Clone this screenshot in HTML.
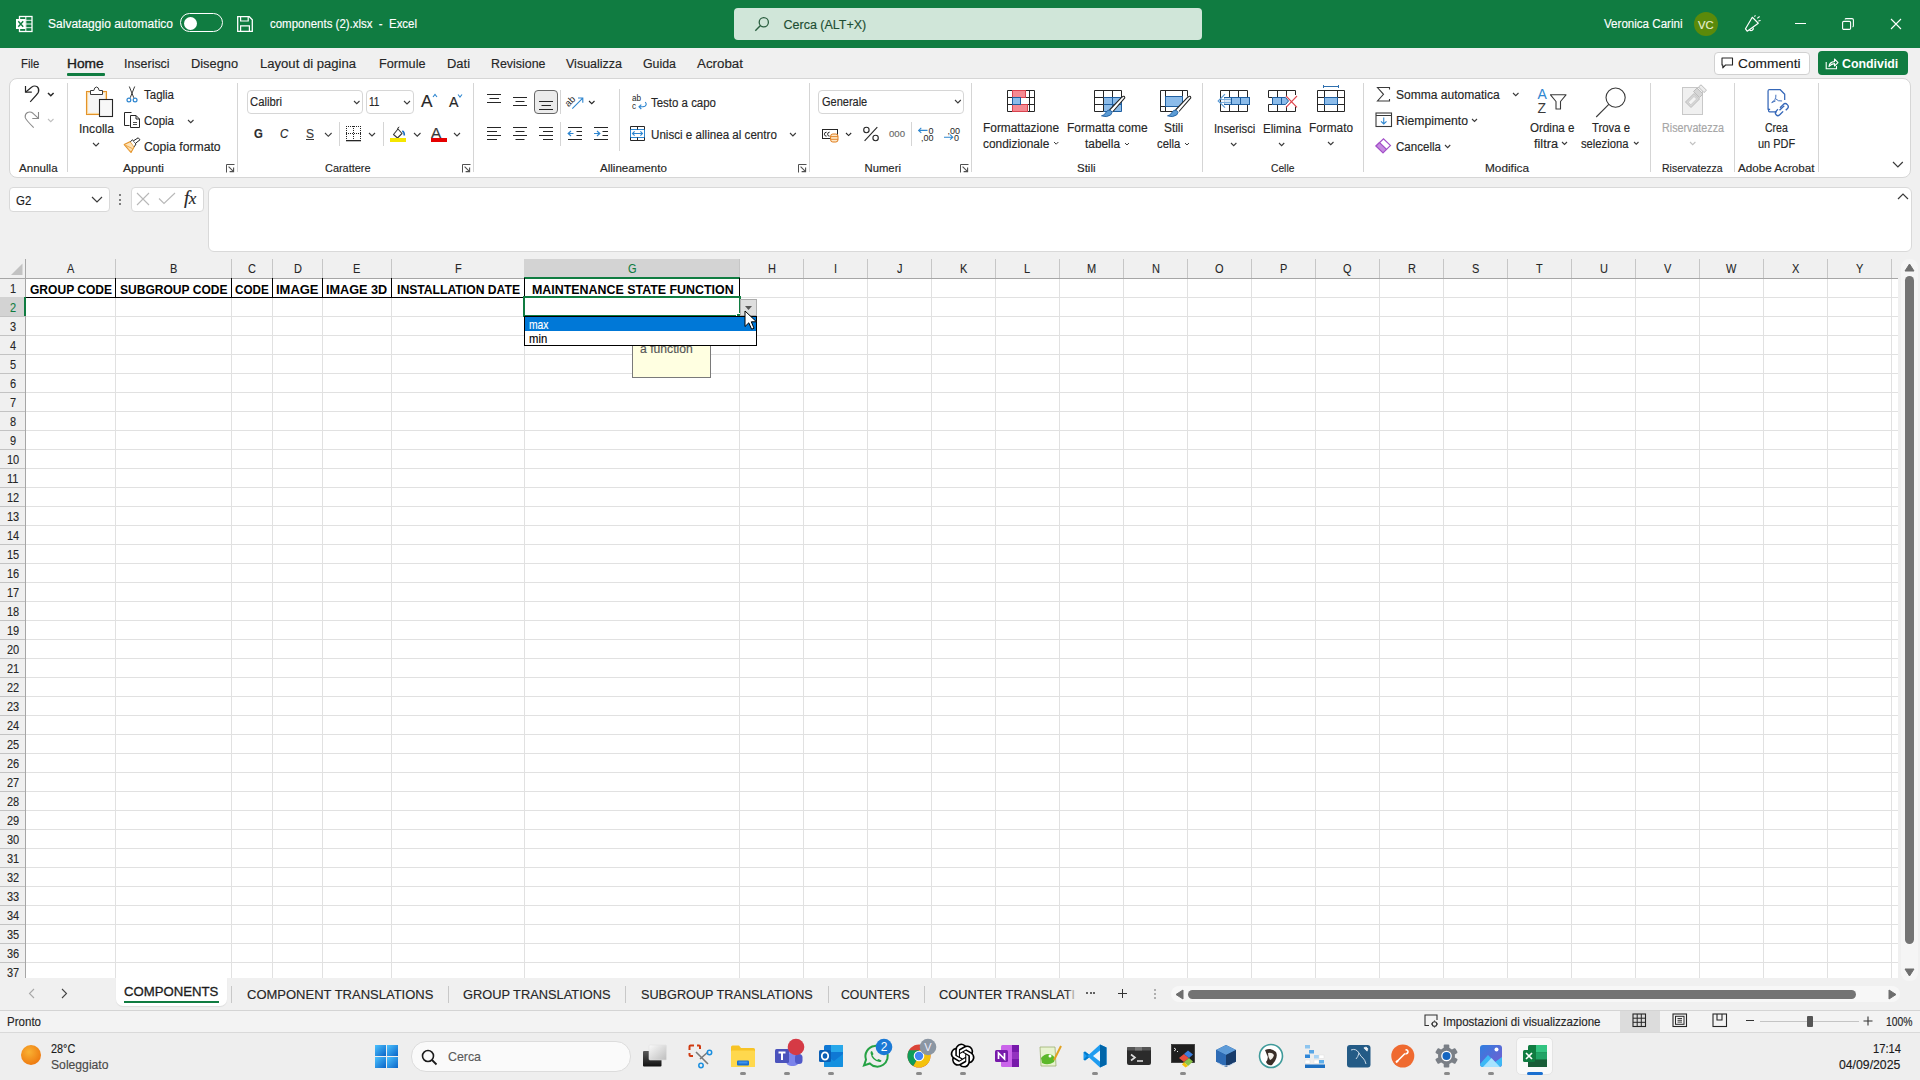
<!DOCTYPE html><html><head><meta charset="utf-8"><style>
html,body{margin:0;padding:0}
body{width:1920px;height:1080px;position:relative;overflow:hidden;background:#f0f0f0;font-family:"Liberation Sans",sans-serif}
.a{position:absolute;box-sizing:content-box}
.t{position:absolute;white-space:pre;line-height:1;transform-origin:0 0;-webkit-text-stroke:0.15px currentColor}
svg.a{overflow:visible}
</style></head><body>
<div class="a" style="left:0px;top:0px;width:1920px;height:48px;background:#107c41;"></div>
<svg class="a" style="left:15px;top:15px;" width="18" height="18" viewBox="0 0 18 18"><rect x="4.5" y="1.5" width="12.5" height="15" fill="none" stroke="#fff" stroke-width="1.3"/><line x1="10.8" y1="1.5" x2="10.8" y2="16.5" stroke="#fff" stroke-width="1"/><line x1="4.5" y1="5.3" x2="17" y2="5.3" stroke="#fff" stroke-width="0.9"/><line x1="4.5" y1="9" x2="17" y2="9" stroke="#fff" stroke-width="0.9"/><line x1="4.5" y1="12.7" x2="17" y2="12.7" stroke="#fff" stroke-width="0.9"/><rect x="1" y="4" width="9.5" height="10" fill="#fff"/><path d="M3.3 6.2 L8.2 11.8 M8.2 6.2 L3.3 11.8" stroke="#107c41" stroke-width="1.4"/></svg>
<div class="t" style="left:48.00px;top:18.12px;font-size:12.5px;color:#ffffff;transform:scaleX(0.9620);">Salvataggio automatico</div>
<div class="a" style="left:180px;top:13px;width:41px;height:17px;border:1.5px solid #fff;border-radius:11px;"></div>
<div class="a" style="left:184px;top:16.5px;width:13px;height:13px;background:#fff;border-radius:50%;"></div>
<svg class="a" style="left:236px;top:15px;" width="18" height="18" viewBox="0 0 18 18"><path d="M1.7 1.7 H13.3 L16.3 4.7 V16.3 H1.7 Z" fill="none" stroke="#fff" stroke-width="1.3"/><path d="M4.6 1.7 V6 H12.2 V1.7" fill="none" stroke="#fff" stroke-width="1.2"/><path d="M4.6 16.3 V10.8 H13.4 V16.3" fill="none" stroke="#fff" stroke-width="1.2"/></svg>
<div class="t" style="left:269.50px;top:18.32px;font-size:12.5px;color:#ffffff;transform:scaleX(0.9161);">components (2).xlsx  -  Excel</div>
<div class="a" style="left:734px;top:8px;width:468px;height:32px;background:#d0e6d9;border-radius:4px;"></div>
<svg class="a" style="left:754px;top:16px;" width="16" height="16" viewBox="0 0 16 16"><circle cx="9.8" cy="6.2" r="4.6" fill="none" stroke="#2b5f40" stroke-width="1.3"/><line x1="6.5" y1="9.5" x2="1.3" y2="14.7" stroke="#2b5f40" stroke-width="1.4"/></svg>
<div class="t" style="left:783.50px;top:18.62px;font-size:12.5px;color:#1e4e33;">Cerca (ALT+X)</div>
<div class="t" style="left:1604.00px;top:18.32px;font-size:12.5px;color:#ffffff;transform:scaleX(0.9261);">Veronica Carini</div>
<div class="a" style="left:1694px;top:12px;width:24px;height:24px;background:#5b8a0a;border-radius:50%;"></div>
<div class="t" style="left:1698.30px;top:20.09px;font-size:11px;color:#e8f0d0;transform:scaleX(1.0143);">VC</div>
<svg class="a" style="left:1744px;top:15px;" width="19" height="18" viewBox="0 0 19 18"><path d="M1.5 13.8 L8.3 2.3 L14.3 8.2 L3.2 16.2 Z" fill="none" stroke="#fff" stroke-width="1.2" stroke-linejoin="round"/><path d="M5.5 14.8 A2.2 2.2 0 0 0 9.2 12.6" fill="none" stroke="#fff" stroke-width="1.2"/><path d="M10.5 1.7 L11.4 0.3 M13.2 3.4 L15.6 1.5 M14.3 6 L16.6 5.5" stroke="#fff" stroke-width="1.1"/></svg>
<div class="a" style="left:1795px;top:23px;width:10.5px;height:1.2px;background:#fff;"></div>
<svg class="a" style="left:1842px;top:18px;" width="12" height="12" viewBox="0 0 12 12"><rect x="0.6" y="3.4" width="8" height="8" rx="1.2" fill="none" stroke="#fff" stroke-width="1.1"/><path d="M3 1.4 Q3.3 0.6 4.2 0.6 H10 Q11.4 0.6 11.4 2 V7.8 Q11.4 8.6 10.6 8.9" fill="none" stroke="#fff" stroke-width="1.1"/></svg>
<svg class="a" style="left:1890px;top:18px;" width="12" height="12" viewBox="0 0 12 12"><path d="M1 1 L11 11 M11 1 L1 11" stroke="#fff" stroke-width="1.1"/></svg>
<div class="t" style="left:21.40px;top:58.12px;font-size:12.5px;color:#262626;transform:scaleX(0.9036);">File</div>
<div class="t" style="left:67.30px;top:58.12px;font-size:12.5px;color:#1b1b1b;transform:scaleX(1.1007);-webkit-text-stroke:0.35px #1b1b1b;">Home</div>
<div class="t" style="left:124.40px;top:58.12px;font-size:12.5px;color:#262626;transform:scaleX(0.9947);">Inserisci</div>
<div class="t" style="left:190.50px;top:58.12px;font-size:12.5px;color:#262626;transform:scaleX(1.0271);">Disegno</div>
<div class="t" style="left:260.40px;top:58.12px;font-size:12.5px;color:#262626;transform:scaleX(1.0464);">Layout di pagina</div>
<div class="t" style="left:379.00px;top:58.12px;font-size:12.5px;color:#262626;transform:scaleX(1.0143);">Formule</div>
<div class="t" style="left:447.00px;top:58.12px;font-size:12.5px;color:#262626;transform:scaleX(1.0347);">Dati</div>
<div class="t" style="left:491.00px;top:58.12px;font-size:12.5px;color:#262626;transform:scaleX(0.9930);">Revisione</div>
<div class="t" style="left:566.00px;top:58.12px;font-size:12.5px;color:#262626;">Visualizza</div>
<div class="t" style="left:642.50px;top:58.12px;font-size:12.5px;color:#262626;transform:scaleX(0.9894);">Guida</div>
<div class="t" style="left:697.00px;top:58.12px;font-size:12.5px;color:#262626;transform:scaleX(1.0678);">Acrobat</div>
<div class="a" style="left:67px;top:73px;width:38px;height:2.5px;background:#107c41;border-radius:1px;"></div>
<div class="a" style="left:1713.5px;top:51.5px;width:94px;height:21px;background:#fff;border:1px solid #d1d1d1;border-radius:4px;"></div>
<svg class="a" style="left:1721px;top:57px;" width="13" height="12" viewBox="0 0 13 12"><path d="M1 1 H11.5 V8 H4.5 L1.8 10.8 V8 H1 Z" fill="none" stroke="#262626" stroke-width="1.1" stroke-linejoin="round"/></svg>
<div class="t" style="left:1737.50px;top:56.70px;font-size:13px;color:#1b1b1b;transform:scaleX(1.0551);">Commenti</div>
<div class="a" style="left:1818px;top:51px;width:90px;height:24px;background:#107c41;border-radius:4px;"></div>
<svg class="a" style="left:1825px;top:57px;" width="14" height="13" viewBox="0 0 14 13"><path d="M1.2 5 V11.8 H11.5 V9" fill="none" stroke="#fff" stroke-width="1.1"/><path d="M4 9.5 Q4.5 4.8 9.5 4.6 V2 L13 5.6 L9.5 9 V6.6 Q6.5 6.6 4 9.5 Z" fill="none" stroke="#fff" stroke-width="1.1" stroke-linejoin="round"/></svg>
<div class="t" style="left:1842.00px;top:56.70px;font-size:13px;color:#ffffff;font-weight:700;transform:scaleX(0.9507);-webkit-text-stroke:0;">Condividi</div>
<div class="a" style="left:9px;top:78px;width:1900px;height:97.5px;background:#fff;border:1px solid #d6d6d6;border-radius:8px;"></div>
<div class="a" style="left:67px;top:83px;width:1px;height:89px;background:#d5d5d5;"></div>
<div class="a" style="left:237px;top:83px;width:1px;height:89px;background:#d5d5d5;"></div>
<div class="a" style="left:473px;top:83px;width:1px;height:89px;background:#d5d5d5;"></div>
<div class="a" style="left:809px;top:83px;width:1px;height:89px;background:#d5d5d5;"></div>
<div class="a" style="left:971px;top:83px;width:1px;height:89px;background:#d5d5d5;"></div>
<div class="a" style="left:1202px;top:83px;width:1px;height:89px;background:#d5d5d5;"></div>
<div class="a" style="left:1363px;top:83px;width:1px;height:89px;background:#d5d5d5;"></div>
<div class="a" style="left:1650px;top:83px;width:1px;height:89px;background:#d5d5d5;"></div>
<div class="a" style="left:1734px;top:83px;width:1px;height:89px;background:#d5d5d5;"></div>
<div class="a" style="left:1818px;top:83px;width:1px;height:89px;background:#d5d5d5;"></div>
<div class="a" style="left:339px;top:122px;width:1px;height:24px;background:#d5d5d5;"></div>
<div class="a" style="left:383px;top:122px;width:1px;height:24px;background:#d5d5d5;"></div>
<div class="a" style="left:560px;top:90px;width:1px;height:24px;background:#d5d5d5;"></div>
<div class="a" style="left:560px;top:122px;width:1px;height:24px;background:#d5d5d5;"></div>
<div class="a" style="left:619px;top:89px;width:1px;height:62px;background:#d5d5d5;"></div>
<div class="a" style="left:911px;top:122px;width:1px;height:24px;background:#d5d5d5;"></div>
<div class="t" style="left:19.40px;top:162.93px;font-size:11.3px;color:#262626;transform:scaleX(1.0240);">Annulla</div>
<div class="t" style="left:123.00px;top:162.93px;font-size:11.3px;color:#262626;transform:scaleX(1.0698);">Appunti</div>
<div class="t" style="left:324.75px;top:162.93px;font-size:11.3px;color:#262626;transform:scaleX(0.9681);">Carattere</div>
<div class="t" style="left:599.50px;top:162.93px;font-size:11.3px;color:#262626;transform:scaleX(1.0241);">Allineamento</div>
<div class="t" style="left:864.50px;top:162.93px;font-size:11.3px;color:#262626;">Numeri</div>
<div class="t" style="left:1077.00px;top:162.93px;font-size:11.3px;color:#262626;transform:scaleX(1.0160);">Stili</div>
<div class="t" style="left:1271.00px;top:162.93px;font-size:11.3px;color:#262626;transform:scaleX(0.9087);">Celle</div>
<div class="t" style="left:1484.50px;top:162.93px;font-size:11.3px;color:#262626;transform:scaleX(1.0457);">Modifica</div>
<div class="t" style="left:1661.60px;top:162.93px;font-size:11.3px;color:#262626;transform:scaleX(0.9294);">Riservatezza</div>
<div class="t" style="left:1738.00px;top:162.93px;font-size:11.3px;color:#262626;transform:scaleX(1.0333);">Adobe Acrobat</div>
<svg class="a" style="left:226px;top:164px;" width="9" height="9" viewBox="0 0 9 9"><path d="M0.5 8.5 V0.5 H8.5" fill="none" stroke="#505050" stroke-width="1"/><path d="M2.6 2.6 L7.6 7.6 M7.6 3.6 V7.6 H3.6" fill="none" stroke="#505050" stroke-width="1.1"/></svg>
<svg class="a" style="left:462px;top:164px;" width="9" height="9" viewBox="0 0 9 9"><path d="M0.5 8.5 V0.5 H8.5" fill="none" stroke="#505050" stroke-width="1"/><path d="M2.6 2.6 L7.6 7.6 M7.6 3.6 V7.6 H3.6" fill="none" stroke="#505050" stroke-width="1.1"/></svg>
<svg class="a" style="left:798px;top:164px;" width="9" height="9" viewBox="0 0 9 9"><path d="M0.5 8.5 V0.5 H8.5" fill="none" stroke="#505050" stroke-width="1"/><path d="M2.6 2.6 L7.6 7.6 M7.6 3.6 V7.6 H3.6" fill="none" stroke="#505050" stroke-width="1.1"/></svg>
<svg class="a" style="left:960px;top:164px;" width="9" height="9" viewBox="0 0 9 9"><path d="M0.5 8.5 V0.5 H8.5" fill="none" stroke="#505050" stroke-width="1"/><path d="M2.6 2.6 L7.6 7.6 M7.6 3.6 V7.6 H3.6" fill="none" stroke="#505050" stroke-width="1.1"/></svg>
<svg class="a" style="left:24px;top:84px;" width="16" height="19" viewBox="0 0 16 19"><path d="M1.5 2 V8.2 H7.8" fill="none" stroke="#262626" stroke-width="1.2"/><path d="M1.8 8 L7.5 3.2 Q10.5 1 13.2 2.8 Q15.6 5 14.4 8.3 Q13.8 9.8 6.2 17.8" fill="none" stroke="#262626" stroke-width="1.2"/></svg>
<svg class="a" style="left:46.6px;top:92.1px;" width="7.600000000000001" height="4.800000000000001" viewBox="0 0 7.600000000000001 4.800000000000001"><polyline points="1,1 3.8000000000000007,3.8000000000000007 6.600000000000001,1" fill="none" stroke="#262626" stroke-width="1.5"/></svg>
<svg class="a" style="left:24px;top:110px;" width="16" height="19" viewBox="0 0 16 19"><path d="M14.5 2 V8.5 H8.3" fill="none" stroke="#8a8a8a" stroke-width="1.1"/><path d="M14.2 8.2 L9 3.3 Q6.5 1.3 3.5 2.5 Q0.8 4.2 1.2 7.5 Q1.6 9.6 9.7 17.6" fill="none" stroke="#8a8a8a" stroke-width="1.1"/></svg>
<svg class="a" style="left:46.5px;top:118.125px;" width="7.5" height="4.75" viewBox="0 0 7.5 4.75"><polyline points="1,1 3.75,3.75 6.5,1" fill="none" stroke="#c0c0c0" stroke-width="1.1"/></svg>
<svg class="a" style="left:85px;top:86px;" width="30" height="32" viewBox="0 0 30 32"><rect x="1.5" y="5.5" width="20" height="23" fill="#f6f6f6" stroke="#e3932a" stroke-width="1.1"/><rect x="2.6" y="6.6" width="17.8" height="20.8" fill="none" stroke="#fbd79a" stroke-width="1"/><path d="M5.5 8.5 V4.5 H8.8 Q9.5 1 11.5 1 Q13.5 1 14.2 4.5 H17.5 V8.5 Z" fill="#fff" stroke="#3a3a3a" stroke-width="1" stroke-linejoin="round"/><rect x="14.5" y="13.5" width="13" height="17" fill="#f7f7f7" stroke="#262626" stroke-width="1.1"/></svg>
<div class="t" style="left:79.00px;top:123.32px;font-size:12.5px;color:#262626;transform:scaleX(0.9687);">Incolla</div>
<svg class="a" style="left:92px;top:142.0px;" width="8" height="5.0" viewBox="0 0 8 5.0"><polyline points="1,1 4.0,4.0 7,1" fill="none" stroke="#3a3a3a" stroke-width="1.1"/></svg>
<svg class="a" style="left:123px;top:85px;" width="16" height="18" viewBox="0 0 16 18"><path d="M6.3 1.5 L10.8 12.8 M11.7 1.5 L7.2 12.8" stroke="#3a3a3a" stroke-width="1" fill="none"/><circle cx="5.9" cy="15" r="1.9" fill="#fff" stroke="#2e86d0" stroke-width="1.2"/><circle cx="12.1" cy="15" r="1.9" fill="#fff" stroke="#2e86d0" stroke-width="1.2"/></svg>
<div class="t" style="left:144.00px;top:89.32px;font-size:12.5px;color:#262626;transform:scaleX(0.9186);">Taglia</div>
<svg class="a" style="left:123px;top:111px;" width="18" height="18" viewBox="0 0 18 18"><path d="M8.5 1.5 H1.5 V14.5 H6.5" fill="none" stroke="#262626" stroke-width="1"/><path d="M7.5 4.5 H13 L16.5 8 V16.5 H7.5 Z" fill="#fff" stroke="#262626" stroke-width="1" stroke-linejoin="round"/><path d="M13 4.5 V8 H16.5" fill="none" stroke="#262626" stroke-width="1"/><path d="M10 11.5 H14 M10 13.5 H14" stroke="#3a3a3a" stroke-width="0.9"/></svg>
<div class="t" style="left:144.00px;top:115.07px;font-size:12.5px;color:#262626;transform:scaleX(0.9186);">Copia</div>
<svg class="a" style="left:186.5px;top:118.625px;" width="7.5" height="4.75" viewBox="0 0 7.5 4.75"><polyline points="1,1 3.75,3.75 6.5,1" fill="none" stroke="#3a3a3a" stroke-width="1.1"/></svg>
<svg class="a" style="left:123px;top:137px;" width="18" height="17" viewBox="0 0 18 17"><path d="M1.2 7.6 L7.4 4.6 L11.2 9.8 L8 15.4 Z" fill="#fde3b8" stroke="#e3932a" stroke-width="1.1" stroke-linejoin="round"/><path d="M2 8 L9.4 11.6 M4.6 11.6 L8 15.4" stroke="#f0a848" stroke-width="1"/><path d="M7.4 4.6 L9.6 2.8 L13 7 L11.2 9.8" fill="#fff" stroke="#262626" stroke-width="1" stroke-linejoin="round"/><path d="M10.5 3.8 L15.2 0.8 L17 2.8 L12.6 6.2" fill="#fff" stroke="#262626" stroke-width="1" stroke-linejoin="round"/></svg>
<div class="t" style="left:144.00px;top:140.92px;font-size:12.5px;color:#262626;transform:scaleX(0.9757);">Copia formato</div>
<div class="a" style="left:246.5px;top:90px;width:114px;height:22px;background:#fff;border:1px solid #d6d6d6;border-radius:4px;"></div>
<div class="t" style="left:249.50px;top:95.92px;font-size:12.5px;color:#262626;transform:scaleX(0.9034);">Calibri</div>
<svg class="a" style="left:352.5px;top:99.625px;" width="7.5" height="4.75" viewBox="0 0 7.5 4.75"><polyline points="1,1 3.75,3.75 6.5,1" fill="none" stroke="#3a3a3a" stroke-width="1.1"/></svg>
<div class="a" style="left:365.5px;top:90px;width:46px;height:22px;background:#fff;border:1px solid #d6d6d6;border-radius:4px;"></div>
<div class="t" style="left:368.50px;top:95.92px;font-size:12.5px;color:#262626;transform:scaleX(0.8092);">11</div>
<svg class="a" style="left:403px;top:99.5px;" width="8" height="5.0" viewBox="0 0 8 5.0"><polyline points="1,1 4.0,4.0 7,1" fill="none" stroke="#3a3a3a" stroke-width="1.1"/></svg>
<div class="t" style="left:421.00px;top:92.51px;font-size:17px;color:#262626;transform:scaleX(1.0142);">A</div>
<svg class="a" style="left:432px;top:93px;" width="6" height="5" viewBox="0 0 6 5"><polyline points="1,4 3,1.5 5,4" fill="none" stroke="#2e86d0" stroke-width="1.1"/></svg>
<div class="t" style="left:448.50px;top:95.05px;font-size:14px;color:#262626;transform:scaleX(1.0174);">A</div>
<svg class="a" style="left:457px;top:93px;" width="6" height="5" viewBox="0 0 6 5"><polyline points="1,1.5 3,4 5,1.5" fill="none" stroke="#2e86d0" stroke-width="1.1"/></svg>
<div class="t" style="left:253.50px;top:127.40px;font-size:13px;color:#2b2b2b;font-weight:700;transform:scaleX(0.8702);">G</div>
<div class="t" style="left:280.00px;top:127.40px;font-size:13px;color:#262626;transform:scaleX(0.8842);font-style:italic;">C</div>
<div class="t" style="left:306.00px;top:127.40px;font-size:13px;color:#3a3a3a;transform:scaleX(0.9227);">S</div>
<div class="a" style="left:306px;top:139px;width:8px;height:1.2px;background:#3a3a3a;"></div>
<svg class="a" style="left:324px;top:131.85px;" width="8.600000000000023" height="5.300000000000011" viewBox="0 0 8.600000000000023 5.300000000000011"><polyline points="1,1 4.300000000000011,4.300000000000011 7.600000000000023,1" fill="none" stroke="#3a3a3a" stroke-width="1.1"/></svg>
<svg class="a" style="left:345px;top:125px;" width="17" height="17" viewBox="0 0 17 17"><g fill="#262626"><rect x="1" y="1" width="1" height="1"/><rect x="1" y="3" width="1" height="1"/><rect x="1" y="5" width="1" height="1"/><rect x="1" y="7" width="1" height="1"/><rect x="1" y="8" width="1" height="1"/><rect x="1" y="9" width="1" height="1"/><rect x="1" y="11" width="1" height="1"/><rect x="1" y="13" width="1" height="1"/><rect x="3" y="1" width="1" height="1"/><rect x="3" y="8" width="1" height="1"/><rect x="5" y="1" width="1" height="1"/><rect x="5" y="8" width="1" height="1"/><rect x="7" y="1" width="1" height="1"/><rect x="7" y="8" width="1" height="1"/><rect x="8" y="1" width="1" height="1"/><rect x="8" y="3" width="1" height="1"/><rect x="8" y="5" width="1" height="1"/><rect x="8" y="7" width="1" height="1"/><rect x="8" y="9" width="1" height="1"/><rect x="8" y="11" width="1" height="1"/><rect x="8" y="13" width="1" height="1"/><rect x="9" y="1" width="1" height="1"/><rect x="9" y="8" width="1" height="1"/><rect x="11" y="1" width="1" height="1"/><rect x="11" y="8" width="1" height="1"/><rect x="13" y="1" width="1" height="1"/><rect x="13" y="8" width="1" height="1"/><rect x="15" y="1" width="1" height="1"/><rect x="15" y="3" width="1" height="1"/><rect x="15" y="5" width="1" height="1"/><rect x="15" y="7" width="1" height="1"/><rect x="15" y="8" width="1" height="1"/><rect x="15" y="9" width="1" height="1"/><rect x="15" y="11" width="1" height="1"/><rect x="15" y="13" width="1" height="1"/><rect x="1" y="15" width="15" height="1.3"/></g></svg>
<svg class="a" style="left:368px;top:132.0px;" width="8" height="5.0" viewBox="0 0 8 5.0"><polyline points="1,1 4.0,4.0 7,1" fill="none" stroke="#3a3a3a" stroke-width="1.1"/></svg>
<svg class="a" style="left:389px;top:125px;" width="18" height="18" viewBox="0 0 18 18"><path d="M4.5 9.5 L9 4 L13 8.5 L8.5 13 Z" fill="#fff" stroke="#3a3a3a" stroke-width="1.1" stroke-linejoin="round"/><path d="M8.5 5 Q8.5 2 10.3 2" fill="none" stroke="#3a3a3a" stroke-width="1"/><path d="M13.3 6 Q15.5 7 15.3 10.5" fill="none" stroke="#1e6fc0" stroke-width="1.6"/><rect x="1" y="13" width="16" height="4" fill="#f5e600"/></svg>
<svg class="a" style="left:412.5px;top:131.875px;" width="8.5" height="5.25" viewBox="0 0 8.5 5.25"><polyline points="1,1 4.25,4.25 7.5,1" fill="none" stroke="#3a3a3a" stroke-width="1.1"/></svg>
<div class="t" style="left:431.20px;top:126.35px;font-size:14px;color:#3a3a3a;transform:scaleX(1.0924);">A</div>
<div class="a" style="left:431px;top:138px;width:16px;height:4px;background:#e60000;"></div>
<svg class="a" style="left:453px;top:132.0px;" width="8" height="5.0" viewBox="0 0 8 5.0"><polyline points="1,1 4.0,4.0 7,1" fill="none" stroke="#3a3a3a" stroke-width="1.1"/></svg>
<svg class="a" style="left:480px;top:84px;" width="140" height="64" viewBox="0 0 140 64"><path d="M7 10.5 H21" stroke="#262626" stroke-width="1"/><path d="M9.5 14.5 H19" stroke="#262626" stroke-width="1"/><path d="M7 18.5 H21" stroke="#262626" stroke-width="1"/></svg>
<svg class="a" style="left:480px;top:84px;" width="140" height="64" viewBox="0 0 140 64"><path d="M33 13.5 H47" stroke="#262626" stroke-width="1"/><path d="M35.5 17.5 H44.5" stroke="#262626" stroke-width="1"/><path d="M33 21.5 H47" stroke="#262626" stroke-width="1"/></svg>
<div class="a" style="left:534px;top:90px;width:22px;height:22px;background:#ebebeb;border:1px solid #666;border-radius:4px;"></div>
<svg class="a" style="left:480px;top:84px;" width="140" height="64" viewBox="0 0 140 64"><path d="M59 17.5 H73" stroke="#262626" stroke-width="1"/><path d="M61.5 21.5 H71" stroke="#262626" stroke-width="1"/><path d="M59 25.5 H73" stroke="#262626" stroke-width="1"/></svg>
<svg class="a" style="left:480px;top:84px;" width="140" height="64" viewBox="0 0 140 64"><path d="M7 43.5 H21" stroke="#262626" stroke-width="1"/><path d="M7 47.5 H17" stroke="#262626" stroke-width="1"/><path d="M7 51.5 H21" stroke="#262626" stroke-width="1"/><path d="M7 55.5 H17" stroke="#262626" stroke-width="1"/></svg>
<svg class="a" style="left:480px;top:84px;" width="140" height="64" viewBox="0 0 140 64"><path d="M33 43.5 H47" stroke="#262626" stroke-width="1"/><path d="M35.5 47.5 H44.5" stroke="#262626" stroke-width="1"/><path d="M33 51.5 H47" stroke="#262626" stroke-width="1"/><path d="M35.5 55.5 H44.5" stroke="#262626" stroke-width="1"/></svg>
<svg class="a" style="left:480px;top:84px;" width="140" height="64" viewBox="0 0 140 64"><path d="M59 43.5 H73" stroke="#262626" stroke-width="1"/><path d="M63 47.5 H73" stroke="#262626" stroke-width="1"/><path d="M59 51.5 H73" stroke="#262626" stroke-width="1"/><path d="M63 55.5 H73" stroke="#262626" stroke-width="1"/></svg>
<svg class="a" style="left:480px;top:84px;" width="140" height="64" viewBox="0 0 140 64"><path d="M88 43.5 H102" stroke="#262626" stroke-width="1"/><path d="M96.5 47.5 H102" stroke="#262626" stroke-width="1"/><path d="M96.5 51.5 H102" stroke="#262626" stroke-width="1"/><path d="M88 55.5 H102" stroke="#262626" stroke-width="1"/></svg>
<svg class="a" style="left:480px;top:84px;" width="140" height="64" viewBox="0 0 140 64"><path d="M114 43.5 H128" stroke="#262626" stroke-width="1"/><path d="M122.5 47.5 H128" stroke="#262626" stroke-width="1"/><path d="M122.5 51.5 H128" stroke="#262626" stroke-width="1"/><path d="M114 55.5 H128" stroke="#262626" stroke-width="1"/></svg>
<svg class="a" style="left:566px;top:128px;" width="12" height="11" viewBox="0 0 12 11"><path d="M7.5 5.5 H2.5 M5 3 L2.2 5.5 L5 8" fill="none" stroke="#2e86d0" stroke-width="1.2"/></svg>
<svg class="a" style="left:592px;top:128px;" width="12" height="11" viewBox="0 0 12 11"><path d="M2 5.5 H7.5 M5 3 L7.8 5.5 L5 8" fill="none" stroke="#2e86d0" stroke-width="1.2"/></svg>
<svg class="a" style="left:566px;top:93px;" width="20" height="19" viewBox="0 0 20 19"><text x="0" y="0" font-size="9.5" font-family="Liberation Sans" fill="#262626" transform="translate(2.6 14.2) rotate(-45)">ab</text><path d="M6.3 15.6 L16.5 5.4 M12 5 H16.8 V9.8" fill="none" stroke="#2e86d0" stroke-width="1.1"/></svg>
<svg class="a" style="left:588px;top:99.625px;" width="7.5" height="4.75" viewBox="0 0 7.5 4.75"><polyline points="1,1 3.75,3.75 6.5,1" fill="none" stroke="#262626" stroke-width="1.1"/></svg>
<svg class="a" style="left:631px;top:94px;" width="17" height="17" viewBox="0 0 17 17"><text x="1" y="7.4" font-size="8.2" font-family="Liberation Sans" fill="#262626">ab</text><text x="1" y="14.8" font-size="8.2" font-family="Liberation Sans" fill="#262626">c</text><path d="M14.2 8.2 Q16.3 10.3 14 12.2 Q12.8 12.8 8.2 12.8 M10.3 10.6 L8 12.8 L10.3 15" fill="none" stroke="#2e86d0" stroke-width="1.1"/></svg>
<div class="t" style="left:650.75px;top:97.12px;font-size:12.5px;color:#262626;transform:scaleX(0.9170);">Testo a capo</div>
<svg class="a" style="left:629px;top:125px;" width="17" height="17" viewBox="0 0 17 17"><rect x="1.5" y="4.5" width="14" height="8" fill="#fff" stroke="#2e86d0" stroke-width="1"/><path d="M1.5 4.5 V1.5 H15.5 V4.5 M8.5 1.5 V4.5 M1.5 12.5 V15.5 H15.5 V12.5 M8.5 12.5 V15.5" fill="none" stroke="#262626" stroke-width="1"/><path d="M3.5 8.5 H13.5 M5.6 6.4 L3.5 8.5 L5.6 10.6 M11.4 6.4 L13.5 8.5 L11.4 10.6" fill="none" stroke="#2e86d0" stroke-width="1.1"/></svg>
<div class="t" style="left:650.75px;top:129.07px;font-size:12.5px;color:#262626;transform:scaleX(0.9289);">Unisci e allinea al centro</div>
<svg class="a" style="left:788.7px;top:132.05px;" width="7.7999999999999545" height="4.899999999999977" viewBox="0 0 7.7999999999999545 4.899999999999977"><polyline points="1,1 3.8999999999999773,3.8999999999999773 6.7999999999999545,1" fill="none" stroke="#3a3a3a" stroke-width="1.1"/></svg>
<div class="a" style="left:818px;top:90px;width:144px;height:22px;background:#fff;border:1px solid #d6d6d6;border-radius:4px;"></div>
<div class="t" style="left:821.80px;top:96.32px;font-size:12.5px;color:#262626;transform:scaleX(0.8790);">Generale</div>
<svg class="a" style="left:953.5px;top:99.05000000000001px;" width="7.7999999999999545" height="4.899999999999977" viewBox="0 0 7.7999999999999545 4.899999999999977"><polyline points="1,1 3.8999999999999773,3.8999999999999773 6.7999999999999545,1" fill="none" stroke="#3a3a3a" stroke-width="1.1"/></svg>
<svg class="a" style="left:821px;top:128px;" width="19" height="15" viewBox="0 0 19 15"><rect x="1.5" y="1.5" width="15" height="9" fill="#fff" stroke="#262626" stroke-width="1"/><path d="M5.6 4.2 Q3.4 4.2 3.4 6.2 Q3.4 8.2 5.6 8.2 M8.6 4.2 Q6.6 4.2 6.6 6.2 Q6.6 8.2 8.6 8.2" fill="none" stroke="#262626" stroke-width="1"/><rect x="9.6" y="6" width="7.4" height="8" rx="2.2" fill="#fde7c6" stroke="#e07c1c" stroke-width="1"/><path d="M9.6 8.6 H17 M9.6 11.3 H17" stroke="#e07c1c" stroke-width="0.9"/></svg>
<svg class="a" style="left:844.8px;top:132.2px;" width="7.2000000000000455" height="4.600000000000023" viewBox="0 0 7.2000000000000455 4.600000000000023"><polyline points="1,1 3.6000000000000227,3.6000000000000227 6.2000000000000455,1" fill="none" stroke="#262626" stroke-width="1.1"/></svg>
<svg class="a" style="left:862px;top:126px;" width="18" height="16" viewBox="0 0 18 16"><circle cx="4.4" cy="4" r="2.7" fill="none" stroke="#262626" stroke-width="1.1"/><circle cx="13.6" cy="12" r="2.7" fill="none" stroke="#262626" stroke-width="1.1"/><line x1="15.3" y1="1.2" x2="2.6" y2="14.8" stroke="#262626" stroke-width="1.1"/></svg>
<div class="t" style="left:888.90px;top:129.06px;font-size:9.5px;color:#6a6a6a;transform:scaleX(1.0096);">000</div>
<svg class="a" style="left:917px;top:125px;" width="18" height="17" viewBox="0 0 18 17"><text x="11.6" y="8.8" font-size="9" font-family="Liberation Sans" fill="#262626">0</text><text x="4" y="15.6" font-size="9" font-family="Liberation Sans" fill="#262626">,00</text><path d="M10.5 5.4 H1.8 M4.3 2.9 L1.6 5.4 L4.3 7.9" fill="none" stroke="#2e86d0" stroke-width="1.1"/></svg>
<svg class="a" style="left:943px;top:125px;" width="18" height="17" viewBox="0 0 18 17"><text x="4.5" y="8.8" font-size="9" font-family="Liberation Sans" fill="#262626">,00</text><text x="11" y="15.6" font-size="9" font-family="Liberation Sans" fill="#262626">0</text><path d="M1 12.2 H9.6 M7.1 9.7 L9.8 12.2 L7.1 14.7" fill="none" stroke="#2e86d0" stroke-width="1.1"/></svg>
<div class="t" style="left:983.00px;top:122.32px;font-size:12.5px;color:#262626;transform:scaleX(0.9513);">Formattazione</div>
<div class="t" style="left:982.75px;top:137.82px;font-size:12.5px;color:#262626;transform:scaleX(0.9534);">condizionale</div>
<svg class="a" style="left:1052.6px;top:141.39999999999998px;" width="6.400000000000091" height="4.2000000000000455" viewBox="0 0 6.400000000000091 4.2000000000000455"><polyline points="1,1 3.2000000000000455,3.2000000000000455 5.400000000000091,1" fill="none" stroke="#3a3a3a" stroke-width="1"/></svg>
<div class="t" style="left:1067.40px;top:122.32px;font-size:12.5px;color:#262626;transform:scaleX(0.9589);">Formatta come</div>
<div class="t" style="left:1085.00px;top:137.82px;font-size:12.5px;color:#262626;transform:scaleX(0.9502);">tabella</div>
<svg class="a" style="left:1124px;top:141.5px;" width="6" height="4.0" viewBox="0 0 6 4.0"><polyline points="1,1 3.0,3.0 5,1" fill="none" stroke="#3a3a3a" stroke-width="1"/></svg>
<div class="t" style="left:1163.60px;top:122.32px;font-size:12.5px;color:#262626;transform:scaleX(0.9508);">Stili</div>
<div class="t" style="left:1156.75px;top:137.82px;font-size:12.5px;color:#262626;transform:scaleX(0.9044);">cella</div>
<svg class="a" style="left:1184px;top:141.5px;" width="6" height="4.0" viewBox="0 0 6 4.0"><polyline points="1,1 3.0,3.0 5,1" fill="none" stroke="#3a3a3a" stroke-width="1"/></svg>
<div class="t" style="left:1213.50px;top:122.82px;font-size:12.5px;color:#262626;transform:scaleX(0.8998);">Inserisci</div>
<svg class="a" style="left:1229.6px;top:142.14999999999998px;" width="7.400000000000091" height="4.7000000000000455" viewBox="0 0 7.400000000000091 4.7000000000000455"><polyline points="1,1 3.7000000000000455,3.7000000000000455 6.400000000000091,1" fill="none" stroke="#3a3a3a" stroke-width="1.1"/></svg>
<div class="t" style="left:1262.50px;top:122.82px;font-size:12.5px;color:#262626;transform:scaleX(0.9297);">Elimina</div>
<svg class="a" style="left:1277.75px;top:142.1875px;" width="7.25" height="4.625" viewBox="0 0 7.25 4.625"><polyline points="1,1 3.625,3.625 6.25,1" fill="none" stroke="#3a3a3a" stroke-width="1.1"/></svg>
<div class="t" style="left:1308.75px;top:122.32px;font-size:12.5px;color:#262626;transform:scaleX(0.9454);">Formato</div>
<svg class="a" style="left:1326.5px;top:141.125px;" width="7.5" height="4.75" viewBox="0 0 7.5 4.75"><polyline points="1,1 3.75,3.75 6.5,1" fill="none" stroke="#3a3a3a" stroke-width="1.1"/></svg>
<svg class="a" style="left:1376px;top:86px;" width="16" height="17" viewBox="0 0 16 17"><path d="M13.5 3.5 V1.5 H1.5 L7.5 8.3 L1.5 15 H13.5 V13" fill="none" stroke="#3a3a3a" stroke-width="1.1"/></svg>
<div class="t" style="left:1396.00px;top:89.07px;font-size:12.5px;color:#262626;transform:scaleX(0.9635);">Somma automatica</div>
<svg class="a" style="left:1512px;top:92.125px;" width="7.5" height="4.75" viewBox="0 0 7.5 4.75"><polyline points="1,1 3.75,3.75 6.5,1" fill="none" stroke="#3a3a3a" stroke-width="1.1"/></svg>
<svg class="a" style="left:1375px;top:112px;" width="18" height="16" viewBox="0 0 18 16"><rect x="1" y="1" width="15.5" height="13.5" fill="none" stroke="#3a3a3a" stroke-width="1.1"/><path d="M1 3.5 H16.5" stroke="#3a3a3a" stroke-width="1"/><path d="M8.75 5.5 V12 M6 9.3 L8.75 12 L11.5 9.3" fill="none" stroke="#2e86d0" stroke-width="1.1"/></svg>
<div class="t" style="left:1396.00px;top:114.72px;font-size:12.5px;color:#262626;transform:scaleX(0.9778);">Riempimento</div>
<svg class="a" style="left:1471px;top:118.25px;" width="7" height="4.5" viewBox="0 0 7 4.5"><polyline points="1,1 3.5,3.5 6,1" fill="none" stroke="#3a3a3a" stroke-width="1.1"/></svg>
<svg class="a" style="left:1375px;top:138px;" width="17" height="16" viewBox="0 0 17 16"><path d="M1 8 L8.5 0.8 L15.5 7.5 L8 14.8 Z" fill="#fff" stroke="#a24fc8" stroke-width="1.1"/><path d="M1 8 L4.5 4.6 L11.5 11.3 L8 14.8 Z" fill="#c68be0" stroke="#a24fc8" stroke-width="1.1"/></svg>
<div class="t" style="left:1396.00px;top:140.92px;font-size:12.5px;color:#262626;transform:scaleX(0.9252);">Cancella</div>
<svg class="a" style="left:1443.75px;top:144.1875px;" width="7.25" height="4.625" viewBox="0 0 7.25 4.625"><polyline points="1,1 3.625,3.625 6.25,1" fill="none" stroke="#3a3a3a" stroke-width="1.1"/></svg>
<svg class="a" style="left:1537px;top:87px;" width="31" height="29" viewBox="0 0 31 29"><text x="0.5" y="11.5" font-size="14" font-family="Liberation Sans" fill="#2e86d0" textLength="10">A</text><text x="0.5" y="26" font-size="14" font-family="Liberation Sans" fill="#3a3a3a" textLength="10">Z</text><path d="M13.5 7.8 H29 L23.5 14.5 V22 H19 V14.5 Z" fill="none" stroke="#3a3a3a" stroke-width="1.1" stroke-linejoin="round"/></svg>
<div class="t" style="left:1529.50px;top:122.32px;font-size:12.5px;color:#262626;transform:scaleX(0.9282);">Ordina e</div>
<div class="t" style="left:1534.00px;top:137.82px;font-size:12.5px;color:#262626;transform:scaleX(1.0163);">filtra</div>
<svg class="a" style="left:1561px;top:141.25px;" width="7" height="4.5" viewBox="0 0 7 4.5"><polyline points="1,1 3.5,3.5 6,1" fill="none" stroke="#3a3a3a" stroke-width="1.1"/></svg>
<svg class="a" style="left:1595px;top:87px;" width="32" height="31" viewBox="0 0 32 31"><circle cx="20.6" cy="10.6" r="9.6" fill="none" stroke="#3a3a3a" stroke-width="1.1"/><line x1="13.8" y1="17.4" x2="1.2" y2="30" stroke="#3a3a3a" stroke-width="1.1"/></svg>
<div class="t" style="left:1592.00px;top:122.32px;font-size:12.5px;color:#262626;transform:scaleX(0.9067);">Trova e</div>
<div class="t" style="left:1581.00px;top:137.82px;font-size:12.5px;color:#262626;transform:scaleX(0.8994);">seleziona</div>
<svg class="a" style="left:1632.5px;top:141.375px;" width="6.5" height="4.25" viewBox="0 0 6.5 4.25"><polyline points="1,1 3.25,3.25 5.5,1" fill="none" stroke="#3a3a3a" stroke-width="1.1"/></svg>
<svg class="a" style="left:1681px;top:84px;" width="29" height="31" viewBox="0 0 29 31"><rect x="1.5" y="3.5" width="20" height="27" fill="#f0f0f0" stroke="#c8c8c8" stroke-width="1"/><path d="M4.5 18 L13 9.5 L18.5 15 L10 23.5 Z" fill="#d6d6d6" stroke="#bdbdbd" stroke-width="1"/><path d="M7.2 18.2 L13 12.4 L15.6 15 L9.8 20.8 Z" fill="#f3f3f3" stroke="#c8c8c8" stroke-width="0.8"/><path d="M12.5 7.5 L16 4 L22 10 L18.5 13.5 Z" fill="#d6d6d6" stroke="#bdbdbd" stroke-width="1"/><path d="M17.5 3 L20 0.8 L25.5 6.2 L23 8.6 Z" fill="#ececec" stroke="#bdbdbd" stroke-width="1"/></svg>
<div class="t" style="left:1661.60px;top:122.32px;font-size:12.5px;color:#a6a6a6;transform:scaleX(0.8582);">Riservatezza</div>
<svg class="a" style="left:1688.8px;top:141.14999999999998px;" width="7.400000000000091" height="4.7000000000000455" viewBox="0 0 7.400000000000091 4.7000000000000455"><polyline points="1,1 3.7000000000000455,3.7000000000000455 6.400000000000091,1" fill="none" stroke="#c0c0c0" stroke-width="1.1"/></svg>
<svg class="a" style="left:1766px;top:88px;" width="28" height="30" viewBox="0 0 28 30"><g transform="translate(0.5 0.5) scale(1.04)"><path d="M3.5 20 H1.5 V2.5 Q1.5 1 3 1 H13 L17.5 5.5 V11" fill="none" stroke="#3567b8" stroke-width="1.2" stroke-linejoin="round"/><path d="M2 19.5 V21.5 Q2 22.5 3 22.5 H10" fill="none" stroke="#3567b8" stroke-width="1.2"/><path d="M9 6 Q9.5 11 5 13.5 M9 10 Q11 12.5 15 12 M5 13.5 L8.7 12" fill="none" stroke="#3567b8" stroke-width="0.9"/><path d="M13 18.5 L16 15.5 Q18 13.5 20 15.5 Q22 17.5 20 19.5 L18.5 21 M16 22 L13 25 Q11 27 9.5 25.5 Q7.5 23.5 9.5 21.5 L11 20" fill="none" stroke="#3567b8" stroke-width="1.3"/><path d="M12.5 21 L17 16.5" stroke="#3567b8" stroke-width="1.3"/></g></svg>
<div class="t" style="left:1764.50px;top:122.12px;font-size:12.5px;color:#262626;transform:scaleX(0.8416);">Crea</div>
<div class="t" style="left:1757.50px;top:137.92px;font-size:12.5px;color:#262626;transform:scaleX(0.8778);">un PDF</div>
<svg class="a" style="left:1891.6px;top:161.04999999999995px;" width="11.800000000000182" height="6.900000000000091" viewBox="0 0 11.800000000000182 6.900000000000091"><polyline points="1,1 5.900000000000091,5.900000000000091 10.800000000000182,1" fill="none" stroke="#3a3a3a" stroke-width="1.2"/></svg>
<svg class="a" style="left:1006px;top:89px;" width="31" height="25" viewBox="0 0 31 25"><path d="M1.5 1.5 H28.5 V22.5 H1.5 Z M6.5 1.5 V22.5 M23.5 1.5 V22.5 M1.5 8.5 H28.5 M1.5 15.5 H28.5" fill="none" stroke="#262626" stroke-width="1"/><rect x="6.5" y="1.5" width="13" height="7" fill="#f58a92" stroke="#d9434f" stroke-width="1"/><rect x="6.5" y="15.5" width="15" height="7" fill="#f58a92" stroke="#d9434f" stroke-width="1"/><rect x="6.5" y="8.5" width="8" height="7" fill="#8cbcea" stroke="#1f5fa0" stroke-width="1"/><path d="M14.5 8.5 H28.5 M14.5 15.5 H28.5" fill="none" stroke="#b0b0b0" stroke-width="0"/></svg>
<svg class="a" style="left:1093px;top:89px;" width="34" height="30" viewBox="0 0 34 30"><rect x="10.5" y="8.5" width="18" height="14" fill="#8cbcea"/><path d="M1.5 22.5 V1.5 H28.5 V8.5 M1.5 8.5 H10.5 M1.5 15.5 H10.5 M10.5 1.5 V22.5 H1.5 M19.5 1.5 V8.5" fill="none" stroke="#262626" stroke-width="1"/><path d="M10.5 8.5 H28.5 V22.5 H10.5 M19.5 8.5 V22.5 M10.5 15.5 H28.5" fill="none" stroke="#1f5fa0" stroke-width="1"/><path d="M16.5 21 L28.8 8.2 Q31.5 6 31.8 8.8 L20 22.5" fill="#fff" stroke="#262626" stroke-width="1.1" stroke-linejoin="round"/><path d="M8.5 26.8 Q11.5 26.5 12.8 23.5 Q14.6 20 17.6 21.4 Q20.4 23.2 17.6 26 Q13.6 28.8 8.5 26.8 Z" fill="#5b9bd5" stroke="#1f5fa0" stroke-width="0.9"/></svg>
<svg class="a" style="left:1159px;top:89px;" width="34" height="30" viewBox="0 0 34 30"><rect x="6.5" y="7.5" width="17" height="10" fill="#8cbcea"/><path d="M1.5 1.5 H28.5 V7.5 M1.5 1.5 V22.5 H15 M6.5 1.5 V22.5 M1.5 17.5 H6.5 M23.5 1.5 V7.5" fill="none" stroke="#262626" stroke-width="1"/><path d="M6.5 7.5 H23.5 V17.5 H6.5 Z" fill="none" stroke="#1f5fa0" stroke-width="1"/><path d="M16.5 21 L28.8 8.2 Q31.5 6 31.8 8.8 L20 22.5" fill="#fff" stroke="#262626" stroke-width="1.1" stroke-linejoin="round"/><path d="M8.5 26.8 Q11.5 26.5 12.8 23.5 Q14.6 20 17.6 21.4 Q20.4 23.2 17.6 26 Q13.6 28.8 8.5 26.8 Z" fill="#5b9bd5" stroke="#1f5fa0" stroke-width="0.9"/></svg>
<svg class="a" style="left:1216px;top:89px;" width="36" height="25" viewBox="0 0 36 25"><path d="M4.5 1.5 H31.5 V22.5 H4.5 Z M13.5 1.5 V22.5 M22.5 1.5 V22.5" fill="none" stroke="#262626" stroke-width="1"/><rect x="8.5" y="8.5" width="25" height="7" fill="#8cbcea" stroke="#1f5fa0" stroke-width="1"/><path d="M15.5 8.5 V15.5 M24.5 8.5 V15.5" stroke="#1f5fa0" stroke-width="1"/><path d="M14.5 10.6 H5 M14.5 13.4 H5" stroke="#fff" stroke-width="2.2"/><path d="M15 10.6 H4.5 M15 13.4 H4.5" fill="none" stroke="#5b9bd5" stroke-width="0.9"/><path d="M9 5.2 L2.2 12 L9 18.6" fill="none" stroke="#5b9bd5" stroke-width="1.2"/></svg>
<svg class="a" style="left:1267px;top:89px;" width="33" height="25" viewBox="0 0 33 25"><path d="M1.5 8.5 V1.5 H28.5 V6 M1.5 15.5 V22.5 H28.5 V17.5 M10.5 1.5 V8.5 M19.5 1.5 V7 M10.5 15.5 V22.5 M19.5 17 V22.5 M1.5 8.5 H5.5 M1.5 15.5 H5.5" fill="none" stroke="#262626" stroke-width="1"/><path d="M5.5 8.5 H18.5 L21.5 12 L18.5 15.5 H5.5 Z" fill="#8cbcea" stroke="#1f5fa0" stroke-width="1" stroke-linejoin="round"/><path d="M14.5 8.5 V15.5" stroke="#1f5fa0" stroke-width="1"/><path d="M19 7 L30 18.4 M30 7 L19 18.4" stroke="#e0474f" stroke-width="1.1"/></svg>
<svg class="a" style="left:1316px;top:84px;" width="31" height="30" viewBox="0 0 31 30"><path d="M7 2.5 H22.7 M7.5 1 V4 M22.5 1 V4" stroke="#2e6fae" stroke-width="1"/><rect x="8.5" y="13.5" width="13" height="7" fill="#8cbcea"/><path d="M1.5 6.5 H28.5 V27.5 H1.5 Z M8.5 6.5 V13.5 M21.5 6.5 V13.5 M8.5 20.5 V27.5 M21.5 20.5 V27.5 M1.5 13.5 H8.5 M21.5 13.5 H28.5 M1.5 20.5 H8.5 M21.5 20.5 H28.5" fill="none" stroke="#262626" stroke-width="1"/><rect x="8.5" y="13.5" width="13" height="7" fill="none" stroke="#1f5fa0" stroke-width="1"/></svg>
<div class="a" style="left:9px;top:187px;width:99px;height:23px;background:#fff;border:1px solid #d9d9d9;border-radius:4px;"></div>
<div class="t" style="left:15.60px;top:193.70px;font-size:13px;color:#1b1b1b;transform:scaleX(0.8822);">G2</div>
<svg class="a" style="left:91px;top:195.8px;" width="12" height="7.0" viewBox="0 0 12 7.0"><polyline points="1,1 6.0,6.0 11,1" fill="none" stroke="#3a3a3a" stroke-width="1.2"/></svg>
<div class="a" style="left:119px;top:194px;width:2px;height:2px;background:#5a5a5a;border-radius:1px;"></div>
<div class="a" style="left:119px;top:198.5px;width:2px;height:2px;background:#5a5a5a;border-radius:1px;"></div>
<div class="a" style="left:119px;top:203px;width:2px;height:2px;background:#5a5a5a;border-radius:1px;"></div>
<div class="a" style="left:131px;top:187px;width:71px;height:23px;background:#fff;border:1px solid #d9d9d9;border-radius:4px;"></div>
<svg class="a" style="left:136px;top:192px;" width="14" height="14" viewBox="0 0 14 14"><path d="M1 1 L13 13 M13 1 L1 13" stroke="#b8b8b8" stroke-width="1.1"/></svg>
<svg class="a" style="left:158px;top:192px;" width="18" height="13" viewBox="0 0 18 13"><path d="M1 6.5 L6 11.5 L17 1" fill="none" stroke="#b8b8b8" stroke-width="1.1"/></svg>
<div class="t" style="left:184px;top:188px;font-family:'Liberation Serif',serif;font-style:italic;font-size:19px;color:#262626;">f<span style="font-size:17px;margin-left:-0.5px">x</span></div>
<div class="a" style="left:208px;top:186.5px;width:1702px;height:63px;background:#fff;border:1px solid #d9d9d9;border-radius:6px;"></div>
<svg class="a" style="left:1897px;top:193px;" width="12" height="7" viewBox="0 0 12 7"><polyline points="1,6 6,1 11,6" fill="none" stroke="#3a3a3a" stroke-width="1.2"/></svg>
<div class="a" style="left:26px;top:279px;width:1872px;height:699px;background:#fff;"></div>
<div class="a" style="left:115px;top:279px;width:1px;height:699px;background:#e1e1e1;"></div><div class="a" style="left:231px;top:279px;width:1px;height:699px;background:#e1e1e1;"></div><div class="a" style="left:272px;top:279px;width:1px;height:699px;background:#e1e1e1;"></div><div class="a" style="left:322px;top:279px;width:1px;height:699px;background:#e1e1e1;"></div><div class="a" style="left:391px;top:279px;width:1px;height:699px;background:#e1e1e1;"></div><div class="a" style="left:524px;top:279px;width:1px;height:699px;background:#e1e1e1;"></div><div class="a" style="left:739px;top:279px;width:1px;height:699px;background:#e1e1e1;"></div><div class="a" style="left:803px;top:279px;width:1px;height:699px;background:#e1e1e1;"></div><div class="a" style="left:867px;top:279px;width:1px;height:699px;background:#e1e1e1;"></div><div class="a" style="left:931px;top:279px;width:1px;height:699px;background:#e1e1e1;"></div><div class="a" style="left:995px;top:279px;width:1px;height:699px;background:#e1e1e1;"></div><div class="a" style="left:1059px;top:279px;width:1px;height:699px;background:#e1e1e1;"></div><div class="a" style="left:1123px;top:279px;width:1px;height:699px;background:#e1e1e1;"></div><div class="a" style="left:1187px;top:279px;width:1px;height:699px;background:#e1e1e1;"></div><div class="a" style="left:1251px;top:279px;width:1px;height:699px;background:#e1e1e1;"></div><div class="a" style="left:1315px;top:279px;width:1px;height:699px;background:#e1e1e1;"></div><div class="a" style="left:1379px;top:279px;width:1px;height:699px;background:#e1e1e1;"></div><div class="a" style="left:1443px;top:279px;width:1px;height:699px;background:#e1e1e1;"></div><div class="a" style="left:1507px;top:279px;width:1px;height:699px;background:#e1e1e1;"></div><div class="a" style="left:1571px;top:279px;width:1px;height:699px;background:#e1e1e1;"></div><div class="a" style="left:1635px;top:279px;width:1px;height:699px;background:#e1e1e1;"></div><div class="a" style="left:1699px;top:279px;width:1px;height:699px;background:#e1e1e1;"></div><div class="a" style="left:1763px;top:279px;width:1px;height:699px;background:#e1e1e1;"></div><div class="a" style="left:1827px;top:279px;width:1px;height:699px;background:#e1e1e1;"></div><div class="a" style="left:1891px;top:279px;width:1px;height:699px;background:#e1e1e1;"></div><div class="a" style="left:26px;top:297px;width:1872px;height:1px;background:#e1e1e1;"></div><div class="a" style="left:26px;top:316px;width:1872px;height:1px;background:#e1e1e1;"></div><div class="a" style="left:26px;top:335px;width:1872px;height:1px;background:#e1e1e1;"></div><div class="a" style="left:26px;top:354px;width:1872px;height:1px;background:#e1e1e1;"></div><div class="a" style="left:26px;top:373px;width:1872px;height:1px;background:#e1e1e1;"></div><div class="a" style="left:26px;top:392px;width:1872px;height:1px;background:#e1e1e1;"></div><div class="a" style="left:26px;top:411px;width:1872px;height:1px;background:#e1e1e1;"></div><div class="a" style="left:26px;top:430px;width:1872px;height:1px;background:#e1e1e1;"></div><div class="a" style="left:26px;top:449px;width:1872px;height:1px;background:#e1e1e1;"></div><div class="a" style="left:26px;top:468px;width:1872px;height:1px;background:#e1e1e1;"></div><div class="a" style="left:26px;top:487px;width:1872px;height:1px;background:#e1e1e1;"></div><div class="a" style="left:26px;top:506px;width:1872px;height:1px;background:#e1e1e1;"></div><div class="a" style="left:26px;top:525px;width:1872px;height:1px;background:#e1e1e1;"></div><div class="a" style="left:26px;top:544px;width:1872px;height:1px;background:#e1e1e1;"></div><div class="a" style="left:26px;top:563px;width:1872px;height:1px;background:#e1e1e1;"></div><div class="a" style="left:26px;top:582px;width:1872px;height:1px;background:#e1e1e1;"></div><div class="a" style="left:26px;top:601px;width:1872px;height:1px;background:#e1e1e1;"></div><div class="a" style="left:26px;top:620px;width:1872px;height:1px;background:#e1e1e1;"></div><div class="a" style="left:26px;top:639px;width:1872px;height:1px;background:#e1e1e1;"></div><div class="a" style="left:26px;top:658px;width:1872px;height:1px;background:#e1e1e1;"></div><div class="a" style="left:26px;top:677px;width:1872px;height:1px;background:#e1e1e1;"></div><div class="a" style="left:26px;top:696px;width:1872px;height:1px;background:#e1e1e1;"></div><div class="a" style="left:26px;top:715px;width:1872px;height:1px;background:#e1e1e1;"></div><div class="a" style="left:26px;top:734px;width:1872px;height:1px;background:#e1e1e1;"></div><div class="a" style="left:26px;top:753px;width:1872px;height:1px;background:#e1e1e1;"></div><div class="a" style="left:26px;top:772px;width:1872px;height:1px;background:#e1e1e1;"></div><div class="a" style="left:26px;top:791px;width:1872px;height:1px;background:#e1e1e1;"></div><div class="a" style="left:26px;top:810px;width:1872px;height:1px;background:#e1e1e1;"></div><div class="a" style="left:26px;top:829px;width:1872px;height:1px;background:#e1e1e1;"></div><div class="a" style="left:26px;top:848px;width:1872px;height:1px;background:#e1e1e1;"></div><div class="a" style="left:26px;top:867px;width:1872px;height:1px;background:#e1e1e1;"></div><div class="a" style="left:26px;top:886px;width:1872px;height:1px;background:#e1e1e1;"></div><div class="a" style="left:26px;top:905px;width:1872px;height:1px;background:#e1e1e1;"></div><div class="a" style="left:26px;top:924px;width:1872px;height:1px;background:#e1e1e1;"></div><div class="a" style="left:26px;top:943px;width:1872px;height:1px;background:#e1e1e1;"></div><div class="a" style="left:26px;top:962px;width:1872px;height:1px;background:#e1e1e1;"></div>
<div class="a" style="left:115px;top:259px;width:1px;height:19px;background:#c6c6c6;"></div>
<div class="a" style="left:231px;top:259px;width:1px;height:19px;background:#c6c6c6;"></div>
<div class="a" style="left:272px;top:259px;width:1px;height:19px;background:#c6c6c6;"></div>
<div class="a" style="left:322px;top:259px;width:1px;height:19px;background:#c6c6c6;"></div>
<div class="a" style="left:391px;top:259px;width:1px;height:19px;background:#c6c6c6;"></div>
<div class="a" style="left:524px;top:259px;width:1px;height:19px;background:#c6c6c6;"></div>
<div class="a" style="left:739px;top:259px;width:1px;height:19px;background:#c6c6c6;"></div>
<div class="a" style="left:803px;top:259px;width:1px;height:19px;background:#c6c6c6;"></div>
<div class="a" style="left:867px;top:259px;width:1px;height:19px;background:#c6c6c6;"></div>
<div class="a" style="left:931px;top:259px;width:1px;height:19px;background:#c6c6c6;"></div>
<div class="a" style="left:995px;top:259px;width:1px;height:19px;background:#c6c6c6;"></div>
<div class="a" style="left:1059px;top:259px;width:1px;height:19px;background:#c6c6c6;"></div>
<div class="a" style="left:1123px;top:259px;width:1px;height:19px;background:#c6c6c6;"></div>
<div class="a" style="left:1187px;top:259px;width:1px;height:19px;background:#c6c6c6;"></div>
<div class="a" style="left:1251px;top:259px;width:1px;height:19px;background:#c6c6c6;"></div>
<div class="a" style="left:1315px;top:259px;width:1px;height:19px;background:#c6c6c6;"></div>
<div class="a" style="left:1379px;top:259px;width:1px;height:19px;background:#c6c6c6;"></div>
<div class="a" style="left:1443px;top:259px;width:1px;height:19px;background:#c6c6c6;"></div>
<div class="a" style="left:1507px;top:259px;width:1px;height:19px;background:#c6c6c6;"></div>
<div class="a" style="left:1571px;top:259px;width:1px;height:19px;background:#c6c6c6;"></div>
<div class="a" style="left:1635px;top:259px;width:1px;height:19px;background:#c6c6c6;"></div>
<div class="a" style="left:1699px;top:259px;width:1px;height:19px;background:#c6c6c6;"></div>
<div class="a" style="left:1763px;top:259px;width:1px;height:19px;background:#c6c6c6;"></div>
<div class="a" style="left:1827px;top:259px;width:1px;height:19px;background:#c6c6c6;"></div>
<div class="a" style="left:1891px;top:259px;width:1px;height:19px;background:#c6c6c6;"></div>
<div class="a" style="left:524px;top:259px;width:215px;height:19px;background:#d3d3d3;"></div>
<div class="a" style="left:0px;top:278px;width:1898px;height:1px;background:#a6a6a6;"></div>
<div class="a" style="left:524px;top:277px;width:216px;height:2px;background:#107c41;"></div>
<div class="a" style="left:25px;top:259px;width:1px;height:719px;background:#a6a6a6;"></div>
<svg class="a" style="left:10px;top:263px;" width="13" height="13" viewBox="0 0 13 13"><polygon points="12.5,0.5 12.5,12 1,12" fill="#c2c2c2"/></svg>
<div class="t" style="left:66.83px;top:262.92px;font-size:12.5px;color:#262626;transform:scaleX(0.8800);-webkit-text-stroke:0.1px currentColor;">A</div>
<div class="t" style="left:169.83px;top:262.92px;font-size:12.5px;color:#262626;transform:scaleX(0.8800);-webkit-text-stroke:0.1px currentColor;">B</div>
<div class="t" style="left:248.03px;top:262.92px;font-size:12.5px;color:#262626;transform:scaleX(0.8800);-webkit-text-stroke:0.1px currentColor;">C</div>
<div class="t" style="left:293.53px;top:262.92px;font-size:12.5px;color:#262626;transform:scaleX(0.8800);-webkit-text-stroke:0.1px currentColor;">D</div>
<div class="t" style="left:353.33px;top:262.92px;font-size:12.5px;color:#262626;transform:scaleX(0.8800);-webkit-text-stroke:0.1px currentColor;">E</div>
<div class="t" style="left:454.64px;top:262.92px;font-size:12.5px;color:#262626;transform:scaleX(0.8800);-webkit-text-stroke:0.1px currentColor;">F</div>
<div class="t" style="left:627.72px;top:262.92px;font-size:12.5px;color:#107c41;transform:scaleX(0.8800);-webkit-text-stroke:0.1px currentColor;">G</div>
<div class="t" style="left:767.53px;top:262.92px;font-size:12.5px;color:#262626;transform:scaleX(0.8800);-webkit-text-stroke:0.1px currentColor;">H</div>
<div class="t" style="left:833.97px;top:262.92px;font-size:12.5px;color:#262626;transform:scaleX(0.8800);-webkit-text-stroke:0.1px currentColor;">I</div>
<div class="t" style="left:896.75px;top:262.92px;font-size:12.5px;color:#262626;transform:scaleX(0.8800);-webkit-text-stroke:0.1px currentColor;">J</div>
<div class="t" style="left:959.83px;top:262.92px;font-size:12.5px;color:#262626;transform:scaleX(0.8800);-webkit-text-stroke:0.1px currentColor;">K</div>
<div class="t" style="left:1024.44px;top:262.92px;font-size:12.5px;color:#262626;transform:scaleX(0.8800);-webkit-text-stroke:0.1px currentColor;">L</div>
<div class="t" style="left:1086.92px;top:262.92px;font-size:12.5px;color:#262626;transform:scaleX(0.8800);-webkit-text-stroke:0.1px currentColor;">M</div>
<div class="t" style="left:1151.53px;top:262.92px;font-size:12.5px;color:#262626;transform:scaleX(0.8800);-webkit-text-stroke:0.1px currentColor;">N</div>
<div class="t" style="left:1215.22px;top:262.92px;font-size:12.5px;color:#262626;transform:scaleX(0.8800);-webkit-text-stroke:0.1px currentColor;">O</div>
<div class="t" style="left:1279.83px;top:262.92px;font-size:12.5px;color:#262626;transform:scaleX(0.8800);-webkit-text-stroke:0.1px currentColor;">P</div>
<div class="t" style="left:1343.22px;top:262.92px;font-size:12.5px;color:#262626;transform:scaleX(0.8800);-webkit-text-stroke:0.1px currentColor;">Q</div>
<div class="t" style="left:1407.53px;top:262.92px;font-size:12.5px;color:#262626;transform:scaleX(0.8800);-webkit-text-stroke:0.1px currentColor;">R</div>
<div class="t" style="left:1471.83px;top:262.92px;font-size:12.5px;color:#262626;transform:scaleX(0.8800);-webkit-text-stroke:0.1px currentColor;">S</div>
<div class="t" style="left:1536.14px;top:262.92px;font-size:12.5px;color:#262626;transform:scaleX(0.8800);-webkit-text-stroke:0.1px currentColor;">T</div>
<div class="t" style="left:1599.53px;top:262.92px;font-size:12.5px;color:#262626;transform:scaleX(0.8800);-webkit-text-stroke:0.1px currentColor;">U</div>
<div class="t" style="left:1663.83px;top:262.92px;font-size:12.5px;color:#262626;transform:scaleX(0.8800);-webkit-text-stroke:0.1px currentColor;">V</div>
<div class="t" style="left:1726.31px;top:262.92px;font-size:12.5px;color:#262626;transform:scaleX(0.8800);-webkit-text-stroke:0.1px currentColor;">W</div>
<div class="t" style="left:1791.83px;top:262.92px;font-size:12.5px;color:#262626;transform:scaleX(0.8800);-webkit-text-stroke:0.1px currentColor;">X</div>
<div class="t" style="left:1855.83px;top:262.92px;font-size:12.5px;color:#262626;transform:scaleX(0.8800);-webkit-text-stroke:0.1px currentColor;">Y</div>
<div class="a" style="left:0;top:297px;width:25px;height:1px;background:#c3c3c3;"></div><div class="a" style="left:0;top:316px;width:25px;height:1px;background:#c3c3c3;"></div><div class="a" style="left:0;top:335px;width:25px;height:1px;background:#c3c3c3;"></div><div class="a" style="left:0;top:354px;width:25px;height:1px;background:#c3c3c3;"></div><div class="a" style="left:0;top:373px;width:25px;height:1px;background:#c3c3c3;"></div><div class="a" style="left:0;top:392px;width:25px;height:1px;background:#c3c3c3;"></div><div class="a" style="left:0;top:411px;width:25px;height:1px;background:#c3c3c3;"></div><div class="a" style="left:0;top:430px;width:25px;height:1px;background:#c3c3c3;"></div><div class="a" style="left:0;top:449px;width:25px;height:1px;background:#c3c3c3;"></div><div class="a" style="left:0;top:468px;width:25px;height:1px;background:#c3c3c3;"></div><div class="a" style="left:0;top:487px;width:25px;height:1px;background:#c3c3c3;"></div><div class="a" style="left:0;top:506px;width:25px;height:1px;background:#c3c3c3;"></div><div class="a" style="left:0;top:525px;width:25px;height:1px;background:#c3c3c3;"></div><div class="a" style="left:0;top:544px;width:25px;height:1px;background:#c3c3c3;"></div><div class="a" style="left:0;top:563px;width:25px;height:1px;background:#c3c3c3;"></div><div class="a" style="left:0;top:582px;width:25px;height:1px;background:#c3c3c3;"></div><div class="a" style="left:0;top:601px;width:25px;height:1px;background:#c3c3c3;"></div><div class="a" style="left:0;top:620px;width:25px;height:1px;background:#c3c3c3;"></div><div class="a" style="left:0;top:639px;width:25px;height:1px;background:#c3c3c3;"></div><div class="a" style="left:0;top:658px;width:25px;height:1px;background:#c3c3c3;"></div><div class="a" style="left:0;top:677px;width:25px;height:1px;background:#c3c3c3;"></div><div class="a" style="left:0;top:696px;width:25px;height:1px;background:#c3c3c3;"></div><div class="a" style="left:0;top:715px;width:25px;height:1px;background:#c3c3c3;"></div><div class="a" style="left:0;top:734px;width:25px;height:1px;background:#c3c3c3;"></div><div class="a" style="left:0;top:753px;width:25px;height:1px;background:#c3c3c3;"></div><div class="a" style="left:0;top:772px;width:25px;height:1px;background:#c3c3c3;"></div><div class="a" style="left:0;top:791px;width:25px;height:1px;background:#c3c3c3;"></div><div class="a" style="left:0;top:810px;width:25px;height:1px;background:#c3c3c3;"></div><div class="a" style="left:0;top:829px;width:25px;height:1px;background:#c3c3c3;"></div><div class="a" style="left:0;top:848px;width:25px;height:1px;background:#c3c3c3;"></div><div class="a" style="left:0;top:867px;width:25px;height:1px;background:#c3c3c3;"></div><div class="a" style="left:0;top:886px;width:25px;height:1px;background:#c3c3c3;"></div><div class="a" style="left:0;top:905px;width:25px;height:1px;background:#c3c3c3;"></div><div class="a" style="left:0;top:924px;width:25px;height:1px;background:#c3c3c3;"></div><div class="a" style="left:0;top:943px;width:25px;height:1px;background:#c3c3c3;"></div><div class="a" style="left:0;top:962px;width:25px;height:1px;background:#c3c3c3;"></div>
<div class="a" style="left:0px;top:297px;width:25px;height:19px;background:#d3d3d3;"></div>
<div class="a" style="left:24px;top:297px;width:2px;height:19px;background:#107c41;"></div>
<div class="t" style="left:9.74px;top:282.92px;font-size:12.5px;color:#262626;transform:scaleX(0.8800);-webkit-text-stroke:0.1px currentColor;">1</div>
<div class="t" style="left:9.74px;top:301.92px;font-size:12.5px;color:#107c41;transform:scaleX(0.8800);-webkit-text-stroke:0.1px currentColor;">2</div>
<div class="t" style="left:9.74px;top:320.92px;font-size:12.5px;color:#262626;transform:scaleX(0.8800);-webkit-text-stroke:0.1px currentColor;">3</div>
<div class="t" style="left:9.74px;top:339.92px;font-size:12.5px;color:#262626;transform:scaleX(0.8800);-webkit-text-stroke:0.1px currentColor;">4</div>
<div class="t" style="left:9.74px;top:358.92px;font-size:12.5px;color:#262626;transform:scaleX(0.8800);-webkit-text-stroke:0.1px currentColor;">5</div>
<div class="t" style="left:9.74px;top:377.92px;font-size:12.5px;color:#262626;transform:scaleX(0.8800);-webkit-text-stroke:0.1px currentColor;">6</div>
<div class="t" style="left:9.74px;top:396.92px;font-size:12.5px;color:#262626;transform:scaleX(0.8800);-webkit-text-stroke:0.1px currentColor;">7</div>
<div class="t" style="left:9.74px;top:415.92px;font-size:12.5px;color:#262626;transform:scaleX(0.8800);-webkit-text-stroke:0.1px currentColor;">8</div>
<div class="t" style="left:9.74px;top:434.92px;font-size:12.5px;color:#262626;transform:scaleX(0.8800);-webkit-text-stroke:0.1px currentColor;">9</div>
<div class="t" style="left:6.68px;top:453.92px;font-size:12.5px;color:#262626;transform:scaleX(0.8800);-webkit-text-stroke:0.1px currentColor;">10</div>
<div class="t" style="left:7.09px;top:472.92px;font-size:12.5px;color:#262626;transform:scaleX(0.8800);-webkit-text-stroke:0.1px currentColor;">11</div>
<div class="t" style="left:6.68px;top:491.92px;font-size:12.5px;color:#262626;transform:scaleX(0.8800);-webkit-text-stroke:0.1px currentColor;">12</div>
<div class="t" style="left:6.68px;top:510.92px;font-size:12.5px;color:#262626;transform:scaleX(0.8800);-webkit-text-stroke:0.1px currentColor;">13</div>
<div class="t" style="left:6.68px;top:529.92px;font-size:12.5px;color:#262626;transform:scaleX(0.8800);-webkit-text-stroke:0.1px currentColor;">14</div>
<div class="t" style="left:6.68px;top:548.92px;font-size:12.5px;color:#262626;transform:scaleX(0.8800);-webkit-text-stroke:0.1px currentColor;">15</div>
<div class="t" style="left:6.68px;top:567.92px;font-size:12.5px;color:#262626;transform:scaleX(0.8800);-webkit-text-stroke:0.1px currentColor;">16</div>
<div class="t" style="left:6.68px;top:586.92px;font-size:12.5px;color:#262626;transform:scaleX(0.8800);-webkit-text-stroke:0.1px currentColor;">17</div>
<div class="t" style="left:6.68px;top:605.92px;font-size:12.5px;color:#262626;transform:scaleX(0.8800);-webkit-text-stroke:0.1px currentColor;">18</div>
<div class="t" style="left:6.68px;top:624.92px;font-size:12.5px;color:#262626;transform:scaleX(0.8800);-webkit-text-stroke:0.1px currentColor;">19</div>
<div class="t" style="left:6.68px;top:643.92px;font-size:12.5px;color:#262626;transform:scaleX(0.8800);-webkit-text-stroke:0.1px currentColor;">20</div>
<div class="t" style="left:6.68px;top:662.92px;font-size:12.5px;color:#262626;transform:scaleX(0.8800);-webkit-text-stroke:0.1px currentColor;">21</div>
<div class="t" style="left:6.68px;top:681.92px;font-size:12.5px;color:#262626;transform:scaleX(0.8800);-webkit-text-stroke:0.1px currentColor;">22</div>
<div class="t" style="left:6.68px;top:700.92px;font-size:12.5px;color:#262626;transform:scaleX(0.8800);-webkit-text-stroke:0.1px currentColor;">23</div>
<div class="t" style="left:6.68px;top:719.92px;font-size:12.5px;color:#262626;transform:scaleX(0.8800);-webkit-text-stroke:0.1px currentColor;">24</div>
<div class="t" style="left:6.68px;top:738.92px;font-size:12.5px;color:#262626;transform:scaleX(0.8800);-webkit-text-stroke:0.1px currentColor;">25</div>
<div class="t" style="left:6.68px;top:757.92px;font-size:12.5px;color:#262626;transform:scaleX(0.8800);-webkit-text-stroke:0.1px currentColor;">26</div>
<div class="t" style="left:6.68px;top:776.92px;font-size:12.5px;color:#262626;transform:scaleX(0.8800);-webkit-text-stroke:0.1px currentColor;">27</div>
<div class="t" style="left:6.68px;top:795.92px;font-size:12.5px;color:#262626;transform:scaleX(0.8800);-webkit-text-stroke:0.1px currentColor;">28</div>
<div class="t" style="left:6.68px;top:814.92px;font-size:12.5px;color:#262626;transform:scaleX(0.8800);-webkit-text-stroke:0.1px currentColor;">29</div>
<div class="t" style="left:6.68px;top:833.92px;font-size:12.5px;color:#262626;transform:scaleX(0.8800);-webkit-text-stroke:0.1px currentColor;">30</div>
<div class="t" style="left:6.68px;top:852.92px;font-size:12.5px;color:#262626;transform:scaleX(0.8800);-webkit-text-stroke:0.1px currentColor;">31</div>
<div class="t" style="left:6.68px;top:871.92px;font-size:12.5px;color:#262626;transform:scaleX(0.8800);-webkit-text-stroke:0.1px currentColor;">32</div>
<div class="t" style="left:6.68px;top:890.92px;font-size:12.5px;color:#262626;transform:scaleX(0.8800);-webkit-text-stroke:0.1px currentColor;">33</div>
<div class="t" style="left:6.68px;top:909.92px;font-size:12.5px;color:#262626;transform:scaleX(0.8800);-webkit-text-stroke:0.1px currentColor;">34</div>
<div class="t" style="left:6.68px;top:928.92px;font-size:12.5px;color:#262626;transform:scaleX(0.8800);-webkit-text-stroke:0.1px currentColor;">35</div>
<div class="t" style="left:6.68px;top:947.92px;font-size:12.5px;color:#262626;transform:scaleX(0.8800);-webkit-text-stroke:0.1px currentColor;">36</div>
<div class="t" style="left:6.68px;top:966.92px;font-size:12.5px;color:#262626;transform:scaleX(0.8800);-webkit-text-stroke:0.1px currentColor;">37</div>
<div class="t" style="left:29.60px;top:284.49px;font-size:12.3px;color:#000000;font-weight:700;transform:scaleX(0.9793);-webkit-text-stroke:0;">GROUP CODE</div>
<div class="t" style="left:120.00px;top:284.49px;font-size:12.3px;color:#000000;font-weight:700;transform:scaleX(0.9790);-webkit-text-stroke:0;">SUBGROUP CODE</div>
<div class="t" style="left:235.00px;top:284.49px;font-size:12.3px;color:#000000;font-weight:700;transform:scaleX(0.9497);-webkit-text-stroke:0;">CODE</div>
<div class="t" style="left:276.25px;top:284.49px;font-size:12.3px;color:#000000;font-weight:700;transform:scaleX(1.0541);-webkit-text-stroke:0;">IMAGE</div>
<div class="t" style="left:326.25px;top:284.49px;font-size:12.3px;color:#000000;font-weight:700;transform:scaleX(1.0301);-webkit-text-stroke:0;">IMAGE 3D</div>
<div class="t" style="left:396.70px;top:284.49px;font-size:12.3px;color:#000000;font-weight:700;transform:scaleX(0.9899);-webkit-text-stroke:0;">INSTALLATION DATE</div>
<div class="t" style="left:531.70px;top:284.49px;font-size:12.3px;color:#000000;font-weight:700;transform:scaleX(1.0097);-webkit-text-stroke:0;">MAINTENANCE STATE FUNCTION</div>
<div class="a" style="left:115px;top:278px;width:1px;height:20px;background:#000;"></div>
<div class="a" style="left:231px;top:278px;width:1px;height:20px;background:#000;"></div>
<div class="a" style="left:272px;top:278px;width:1px;height:20px;background:#000;"></div>
<div class="a" style="left:322px;top:278px;width:1px;height:20px;background:#000;"></div>
<div class="a" style="left:391px;top:278px;width:1px;height:20px;background:#000;"></div>
<div class="a" style="left:524px;top:278px;width:1px;height:20px;background:#000;"></div>
<div class="a" style="left:739px;top:278px;width:1px;height:20px;background:#000;"></div>
<div class="a" style="left:26px;top:297px;width:714px;height:1px;background:#000;"></div>
<div class="a" style="left:523px;top:296px;width:214px;height:17px;border:2px solid #107c41;"></div>
<div class="a" style="left:736px;top:313px;width:4px;height:4px;background:#107c41;border:1px solid #fff;"></div>
<div class="a" style="left:740px;top:299px;width:15px;height:15px;background:#dedede;border:1px solid #adadad;"></div>
<svg class="a" style="left:744px;top:305px;" width="9" height="6" viewBox="0 0 9 6"><polygon points="1,1 8,1 4.5,5" fill="#555"/></svg>
<div class="a" style="left:632px;top:338px;width:77px;height:38px;background:#ffffe1;border:1px solid #7a7a7a;"></div>
<div class="t" style="left:639.70px;top:343.04px;font-size:12px;color:#575757;transform:scaleX(1.0147);">a function</div>
<div class="a" style="left:524px;top:316px;width:231px;height:28px;background:#fff;border:1px solid #000;"></div>
<div class="a" style="left:525px;top:317px;width:231px;height:14px;background:#0078d7;"></div>
<div class="t" style="left:528.70px;top:318.20px;font-size:13px;color:#ffffff;transform:scaleX(0.7940);">max</div>
<div class="t" style="left:528.70px;top:331.70px;font-size:13px;color:#000000;transform:scaleX(0.8689);">min</div>
<svg class="a" style="left:744px;top:310px;" width="14" height="21" viewBox="0 0 14 21"><path d="M1 1 V16.5 L4.8 12.8 L7.6 19.2 L10 18.2 L7.3 11.8 H12.5 Z" fill="#fff" stroke="#000" stroke-width="1" stroke-linejoin="round"/></svg>
<div class="a" style="left:1901px;top:259px;width:17px;height:722px;background:#f5f5f5;border-radius:8px;"></div>
<svg class="a" style="left:1904px;top:263px;" width="11" height="9" viewBox="0 0 11 9"><polygon points="5.5,1 10,8 1,8" fill="#6e6e6e" stroke="#6e6e6e" stroke-width="1" stroke-linejoin="round"/></svg>
<div class="a" style="left:1905px;top:276px;width:9px;height:668px;background:#737373;border-radius:4.5px;"></div>
<svg class="a" style="left:1904px;top:968px;" width="11" height="9" viewBox="0 0 11 9"><polygon points="1,1 10,1 5.5,8" fill="#6e6e6e" stroke="#6e6e6e" stroke-width="1" stroke-linejoin="round"/></svg>
<svg class="a" style="left:28px;top:988px;" width="8" height="11" viewBox="0 0 8 11"><polyline points="6,1 1.5,5.5 6,10" fill="none" stroke="#a8a8a8" stroke-width="1.1"/></svg>
<svg class="a" style="left:60px;top:988px;" width="8" height="11" viewBox="0 0 8 11"><polyline points="2,1 6.5,5.5 2,10" fill="none" stroke="#444" stroke-width="1.1"/></svg>
<div class="a" style="left:116px;top:978px;width:111px;height:28px;background:#fff;border-radius:0 0 7px 7px;box-shadow:0 1px 1px rgba(0,0,0,0.08);"></div>
<div class="t" style="left:124.30px;top:984.70px;font-size:13px;color:#1b1b1b;transform:scaleX(1.0132);-webkit-text-stroke:0.3px #1b1b1b;">COMPONENTS</div>
<div class="a" style="left:124px;top:1001px;width:95px;height:2px;background:#107c41;"></div>
<div class="a" style="left:231px;top:986px;width:1px;height:17px;background:#c8c8c8;"></div>
<div class="a" style="left:448px;top:986px;width:1px;height:17px;background:#c8c8c8;"></div>
<div class="a" style="left:625px;top:986px;width:1px;height:17px;background:#c8c8c8;"></div>
<div class="a" style="left:828px;top:986px;width:1px;height:17px;background:#c8c8c8;"></div>
<div class="a" style="left:924px;top:986px;width:1px;height:17px;background:#c8c8c8;"></div>
<div class="t" style="left:247.00px;top:988.30px;font-size:13px;color:#262626;">COMPONENT TRANSLATIONS</div>
<div class="t" style="left:462.50px;top:988.30px;font-size:13px;color:#262626;transform:scaleX(0.9864);">GROUP TRANSLATIONS</div>
<div class="t" style="left:641.25px;top:988.30px;font-size:13px;color:#262626;transform:scaleX(0.9744);">SUBGROUP TRANSLATIONS</div>
<div class="t" style="left:841.25px;top:988.30px;font-size:13px;color:#262626;transform:scaleX(0.9425);">COUNTERS</div>
<div class="t" style="left:938.75px;top:988.30px;font-size:13px;color:#262626;transform:scaleX(0.9841);">COUNTER TRANSLATI</div>
<div class="a" style="left:1066px;top:984px;width:10px;height:20px;background:linear-gradient(90deg,rgba(240,240,240,0),rgba(240,240,240,0.9));"></div>
<div class="a" style="left:1086px;top:992px;width:2px;height:2px;background:#333;border-radius:1px;"></div>
<div class="a" style="left:1089.5px;top:992px;width:2px;height:2px;background:#333;border-radius:1px;"></div>
<div class="a" style="left:1093px;top:992px;width:2px;height:2px;background:#333;border-radius:1px;"></div>
<svg class="a" style="left:1117px;top:988px;" width="12" height="12" viewBox="0 0 12 12"><path d="M5.5 1 V10 M1 5.5 H10" stroke="#333" stroke-width="1"/></svg>
<div class="a" style="left:1154px;top:989px;width:2px;height:2px;background:#9a9a9a;border-radius:1px;"></div>
<div class="a" style="left:1154px;top:993px;width:2px;height:2px;background:#9a9a9a;border-radius:1px;"></div>
<div class="a" style="left:1154px;top:997px;width:2px;height:2px;background:#9a9a9a;border-radius:1px;"></div>
<div class="a" style="left:1171px;top:986px;width:729px;height:16px;background:#f7f7f7;border-radius:8px;"></div>
<svg class="a" style="left:1175px;top:989px;" width="9" height="11" viewBox="0 0 9 11"><polygon points="8,1 8,10 1,5.5" fill="#6e6e6e" stroke="#6e6e6e" stroke-width="1" stroke-linejoin="round"/></svg>
<div class="a" style="left:1188px;top:990px;width:668px;height:9px;background:#737373;border-radius:4.5px;"></div>
<svg class="a" style="left:1888px;top:989px;" width="9" height="11" viewBox="0 0 9 11"><polygon points="1,1 1,10 8,5.5" fill="#6e6e6e" stroke="#6e6e6e" stroke-width="1" stroke-linejoin="round"/></svg>
<div class="a" style="left:0px;top:1010px;width:1920px;height:1px;background:#d4d4d4;"></div>
<div class="a" style="left:0px;top:1011px;width:1920px;height:21px;background:#f3f3f3;"></div>
<div class="t" style="left:7.40px;top:1016.12px;font-size:12.5px;color:#262626;transform:scaleX(0.9232);">Pronto</div>
<svg class="a" style="left:1424px;top:1014px;" width="15" height="14" viewBox="0 0 15 14"><path d="M5 11.5 H1 V1 H13 V6" fill="none" stroke="#333" stroke-width="1.1"/><circle cx="10.5" cy="10" r="2.3" fill="none" stroke="#333" stroke-width="1.1"/><path d="M10.5 6.5 V7.5 M10.5 12.5 V13.5 M7 10 H8 M13 10 H14" stroke="#333" stroke-width="1.1"/></svg>
<div class="t" style="left:1443.00px;top:1016.07px;font-size:12.5px;color:#262626;transform:scaleX(0.9215);">Impostazioni di visualizzazione</div>
<div class="a" style="left:1620px;top:1011px;width:40px;height:21px;background:#dcdcdc;"></div>
<svg class="a" style="left:1632px;top:1013px;" width="15" height="15" viewBox="0 0 15 15"><rect x="1" y="1" width="12.5" height="12.5" fill="none" stroke="#262626" stroke-width="1.1"/><path d="M5.2 1 V13.5 M9.3 1 V13.5 M1 5.2 H13.5 M1 9.3 H13.5" stroke="#262626" stroke-width="1"/></svg>
<svg class="a" style="left:1672px;top:1013px;" width="16" height="15" viewBox="0 0 16 15"><rect x="1" y="1" width="13.5" height="12.5" fill="none" stroke="#262626" stroke-width="1.1"/><rect x="3.5" y="3.3" width="8.5" height="8" fill="none" stroke="#262626" stroke-width="1"/><path d="M5.5 5.5 H10 M5.5 7.3 H10 M5.5 9.1 H10" stroke="#262626" stroke-width="0.9"/></svg>
<svg class="a" style="left:1712px;top:1013px;" width="16" height="15" viewBox="0 0 16 15"><rect x="1" y="1" width="13.5" height="12.5" fill="none" stroke="#262626" stroke-width="1.1"/><path d="M5 1 V7 H10 V1" fill="none" stroke="#262626" stroke-width="1.1"/></svg>
<div class="a" style="left:1746px;top:1020px;width:8px;height:1.2px;background:#333;"></div>
<div class="a" style="left:1760px;top:1021px;width:99px;height:1px;background:#c4c4c4;"></div>
<div class="a" style="left:1807px;top:1016px;width:6px;height:11px;background:#555;border-radius:1px;"></div>
<svg class="a" style="left:1863px;top:1016px;" width="10" height="10" viewBox="0 0 10 10"><path d="M5 0.5 V9.5 M0.5 5 H9.5" stroke="#333" stroke-width="1.1"/></svg>
<div class="t" style="left:1885.50px;top:1016.07px;font-size:12.5px;color:#262626;transform:scaleX(0.8289);">100%</div>
<div class="a" style="left:0px;top:1032px;width:1920px;height:1px;background:#d9d9d9;"></div>
<div class="a" style="left:0px;top:1033px;width:1920px;height:47px;background:#eeeeee;"></div>
<div class="a" style="left:21px;top:1045px;width:20px;height:20px;border-radius:50%;background:radial-gradient(circle at 40% 35%,#f9b233,#ee7a10 75%);"></div>
<div class="t" style="left:50.75px;top:1043.24px;font-size:12px;color:#1b1b1b;transform:scaleX(0.9045);">28°C</div>
<div class="t" style="left:50.75px;top:1058.74px;font-size:12px;color:#4a4a4a;transform:scaleX(1.0139);">Soleggiato</div>
<svg class="a" style="left:374px;top:1044px;" width="25" height="25" viewBox="0 0 25 25"><defs><linearGradient id="wg" x1="0" y1="0" x2="1" y2="1"><stop offset="0" stop-color="#4cc2ff"/><stop offset="1" stop-color="#0a64c8"/></linearGradient></defs><rect x="1" y="1" width="11" height="11" fill="url(#wg)"/><rect x="13" y="1" width="11" height="11" fill="url(#wg)"/><rect x="1" y="13" width="11" height="11" fill="url(#wg)"/><rect x="13" y="13" width="11" height="11" fill="url(#wg)"/></svg>
<div class="a" style="left:411px;top:1041px;width:218px;height:29px;background:#fafafa;border:1px solid #dcdcdc;border-radius:15px;"></div>
<svg class="a" style="left:421px;top:1049px;" width="17" height="17" viewBox="0 0 17 17"><circle cx="7" cy="7" r="5.5" fill="none" stroke="#1b1b1b" stroke-width="1.6"/><line x1="11" y1="11" x2="15.5" y2="15.5" stroke="#1b1b1b" stroke-width="1.8"/></svg>
<div class="t" style="left:448.00px;top:1050.20px;font-size:13px;color:#5a5a5a;transform:scaleX(0.9517);">Cerca</div>
<svg class="a" style="left:642px;top:1044px;" width="26" height="24" viewBox="0 0 26 24"><defs><linearGradient id="tv1" x1="0" y1="0" x2="1" y2="1"><stop offset="0" stop-color="#fafafa"/><stop offset="1" stop-color="#bdbdbd"/></linearGradient><linearGradient id="tv2" x1="0" y1="0" x2="0" y2="1"><stop offset="0" stop-color="#5a5a5a"/><stop offset="1" stop-color="#111"/></linearGradient></defs><rect x="1" y="7" width="18.5" height="15.5" rx="1" fill="url(#tv2)"/><rect x="7" y="1" width="17.5" height="15" rx="1" fill="url(#tv1)" stroke="#e0e0e0" stroke-width="0.6"/></svg>
<svg class="a" style="left:688px;top:1044px;" width="25" height="25" viewBox="0 0 25 25"><path d="M1.5 6 V2.5 Q1.5 1.5 2.5 1.5 H6 M9 1.5 H11 Q12 1.5 12 2.5 V5 M1.5 9 V11 Q1.5 12 2.5 12 H5" fill="none" stroke="#d03a10" stroke-width="2"/><path d="M8 8 L20 20 M12 15 L20 8" stroke="#7a7a7a" stroke-width="1.6"/><circle cx="21.5" cy="8.5" r="2.2" fill="none" stroke="#1a8fe0" stroke-width="1.5"/><circle cx="13" cy="21.5" r="2.2" fill="none" stroke="#1a8fe0" stroke-width="1.5"/></svg>
<svg class="a" style="left:730px;top:1044px;" width="26" height="24" viewBox="0 0 26 24"><path d="M1 3 Q1 1.5 2.5 1.5 H9 L11 4 H23.5 Q25 4 25 5.5 V21.5 Q25 23 23.5 23 H2.5 Q1 23 1 21.5 Z" fill="#f7c325"/><rect x="1" y="6.5" width="24" height="16.5" rx="1.3" fill="#ffd84d"/><rect x="7" y="16.5" width="12" height="5" rx="1" fill="#1a6fd0"/><rect x="8.5" y="17.5" width="9" height="2" fill="#3c93f0"/></svg>
<svg class="a" style="left:774px;top:1037px;" width="34" height="31" viewBox="0 0 34 31"><circle cx="17" cy="13" r="3.5" fill="#7b83eb"/><rect x="12" y="16" width="13" height="13" rx="5" fill="#7b83eb"/><circle cx="25" cy="14" r="2.6" fill="#5059c9"/><rect x="21" y="17" width="7.5" height="10" rx="3.5" fill="#5059c9"/><rect x="1" y="12" width="14" height="14" rx="1.5" fill="#4b53bc"/><path d="M4.5 15.5 H11.5 M8 15.5 V23" stroke="#fff" stroke-width="2"/><circle cx="22" cy="10" r="8.3" fill="#d53a45"/></svg>
<svg class="a" style="left:818px;top:1044px;" width="26" height="24" viewBox="0 0 26 24"><rect x="6" y="1" width="19" height="22" rx="1.5" fill="#0f78d4"/><rect x="13" y="1" width="12" height="7" fill="#28a8ea"/><path d="M6 10 L16 17 L25 10 V22 Q25 23 24 23 H7 Q6 23 6 22 Z" fill="#1490df"/><rect x="1" y="6" width="12" height="12" rx="1.5" fill="#0a5eb4"/><ellipse cx="7" cy="12" rx="3.2" ry="3.6" fill="none" stroke="#fff" stroke-width="1.8"/></svg>
<svg class="a" style="left:862px;top:1037px;" width="34" height="31" viewBox="0 0 34 31"><path d="M12.5 9 A10.5 10.5 0 1 1 7.8 26.5 L2 28.5 L4 22.8 A10.5 10.5 0 0 1 12.5 9 Z" fill="none" stroke="#25a244" stroke-width="2"/><path d="M8.5 16 Q8.5 14 10 14 L11.5 17 L10.5 18.5 Q12 21.5 15 23 L16.5 22 L19.5 23.5 Q19.5 25 17.5 25 Q10 24 8.5 16 Z" fill="#25a244"/><circle cx="22" cy="10" r="8.3" fill="#1b7ad6"/><text x="22" y="14.3" font-size="12" font-family="Liberation Sans" fill="#fff" text-anchor="middle">2</text></svg>
<svg class="a" style="left:906px;top:1037px;" width="34" height="31" viewBox="0 0 34 31"><circle cx="13" cy="19" r="11.5" fill="#db4437"/><path d="M13 19 L24.5 19 A11.5 11.5 0 0 1 7.25 28.96 Z" fill="#f4c20d"/><path d="M13 19 L7.25 28.96 A11.5 11.5 0 0 1 3.04 13.25 L13 13.25 Z" fill="#0f9d58"/><path d="M13 13.25 H24 A11.5 11.5 0 0 1 24.5 19 H13 Z" fill="#f4c20d"/><circle cx="13" cy="19" r="5.3" fill="#fff"/><circle cx="13" cy="19" r="4.2" fill="#4285f4"/><circle cx="22" cy="10" r="8.3" fill="#8b96a3"/><text x="22" y="14" font-size="11" font-family="Liberation Sans" fill="#eef" text-anchor="middle">V</text></svg>
<svg class="a" style="left:950px;top:1043px;" width="26" height="26" viewBox="0 0 26 26"><circle cx="13" cy="13" r="10.5" fill="#fff"/><g transform="translate(0.6 0.6)"><path fill="#000" d="M22.2819 9.8211a5.9847 5.9847 0 0 0-.5157-4.9108 6.0462 6.0462 0 0 0-6.5098-2.9A6.0651 6.0651 0 0 0 4.9807 4.1818a5.9847 5.9847 0 0 0-3.9977 2.9 6.0462 6.0462 0 0 0 .7427 7.0966 5.98 5.98 0 0 0 .511 4.9107 6.051 6.051 0 0 0 6.5146 2.9001A5.9847 5.9847 0 0 0 13.2599 24a6.0557 6.0557 0 0 0 5.7718-4.2058 5.9894 5.9894 0 0 0 3.9977-2.9001 6.0557 6.0557 0 0 0-.7475-7.0729zm-9.022 12.6081a4.4755 4.4755 0 0 1-2.8764-1.0408l.1419-.0804 4.7783-2.7582a.7948.7948 0 0 0 .3927-.6813v-6.7369l2.02 1.1686a.071.071 0 0 1 .038.052v5.5826a4.504 4.504 0 0 1-4.4945 4.4944zm-9.6607-4.1254a4.4708 4.4708 0 0 1-.5346-3.0137l.142.0852 4.783 2.7582a.7712.7712 0 0 0 .7806 0l5.8428-3.3685v2.3324a.0804.0804 0 0 1-.0332.0615L9.74 19.9502a4.4992 4.4992 0 0 1-6.1408-1.6464zM2.3408 7.8956a4.485 4.485 0 0 1 2.3655-1.9728V11.6a.7664.7664 0 0 0 .3879.6765l5.8144 3.3543-2.0201 1.1685a.0757.0757 0 0 1-.071 0l-4.8303-2.7865A4.504 4.504 0 0 1 2.3408 7.872zm16.5963 3.8558L13.1038 8.364 15.1192 7.2a.0757.0757 0 0 1 .071 0l4.8303 2.7913a4.4944 4.4944 0 0 1-.6765 8.1042v-5.6772a.79.79 0 0 0-.407-.667zm2.0107-3.0231l-.142-.0852-4.7735-2.7818a.7759.7759 0 0 0-.7854 0L9.409 9.2297V6.8974a.0662.0662 0 0 1 .0284-.0615l4.8303-2.7866a4.4992 4.4992 0 0 1 6.6802 4.66zM8.3065 12.863l-2.02-1.1638a.0804.0804 0 0 1-.038-.0567V6.0742a4.4992 4.4992 0 0 1 7.3757-3.4537l-.142.0805L8.704 5.459a.7948.7948 0 0 0-.3927.6813zm1.0976-2.3654l2.602-1.4998 2.6069 1.4998v2.9994l-2.5974 1.4997-2.6067-1.4997Z"/></g></svg>
<svg class="a" style="left:994px;top:1044px;" width="26" height="24" viewBox="0 0 26 24"><rect x="7" y="1" width="18" height="22" rx="1.5" fill="#ca64ea"/><rect x="18" y="1" width="7" height="22" fill="#7719aa"/><rect x="18" y="8" width="7" height="7" fill="#9332bf"/><rect x="1" y="6" width="13" height="12" rx="1.5" fill="#7719aa"/><path d="M4.5 15 V9 L10.5 15 V9" fill="none" stroke="#fff" stroke-width="1.7"/></svg>
<svg class="a" style="left:1038px;top:1044px;" width="26" height="25" viewBox="0 0 26 25"><path d="M2 3 H17 L18 22 H3 Z" fill="#e8f3d0" stroke="#9cb070" stroke-width="0.8"/><path d="M3 14 Q8 8 14 11 Q18 13 16 18 Q10 22 4 19 Z" fill="#5cb82a"/><circle cx="12" cy="12" r="1.5" fill="#fff"/><path d="M16 16 L23 2" stroke="#e2a220" stroke-width="2"/></svg>
<svg class="a" style="left:1082px;top:1043px;" width="26" height="26" viewBox="0 0 26 26"><path d="M18 1.5 L24.5 4.5 V21.5 L18 24.5 L7 14.5 L3 17.5 L1.5 16.5 V9.5 L3 8.5 L7 11.5 Z" fill="#1f9cf0"/><path d="M18 1.5 L24.5 4.5 V21.5 L18 24.5 Z" fill="#0065a9"/><path d="M18 7.5 L11 13 L18 18.5 Z" fill="#eef6fd"/><path d="M1.5 9.5 L3 8.5 L7 11.5 L5 13 Z M1.5 16.5 L3 17.5 L7 14.5 L5 13 Z" fill="#007acc"/></svg>
<svg class="a" style="left:1126px;top:1046px;" width="26" height="20" viewBox="0 0 26 20"><rect x="1" y="1" width="24" height="18" rx="2" fill="#2b2b2b"/><rect x="1" y="1" width="24" height="3.5" rx="1" fill="#555"/><rect x="9" y="1" width="7" height="3.5" fill="#777"/><path d="M5 8.5 L9 11.5 L5 14.5" fill="none" stroke="#ddd" stroke-width="1.6"/><path d="M11 15 H17" stroke="#ddd" stroke-width="1.6"/></svg>
<svg class="a" style="left:1171px;top:1044px;" width="25" height="24" viewBox="0 0 25 24"><rect x="0.5" y="0.5" width="23" height="18" fill="#1e1e1e" stroke="#333" stroke-width="0.8"/><path d="M3 4 L5 5.5 L3 7 M6 7.5 H7" stroke="#fff" stroke-width="0.9" fill="none"/><path d="M8 14 L13 10 L18 14 L13 18 Z" fill="#e84c3d"/><path d="M13 10 L17 6.5 L22 10.5 L18 14 Z" fill="#3b7ddd"/><path d="M13 18 L18 14 L22 17.5 L17 22 Z" fill="#8bc34a"/><path d="M17 22 L13 18 L11 20.5 L14.5 23.5 Z" fill="#f4c20d"/></svg>
<svg class="a" style="left:1215px;top:1044px;" width="22" height="24" viewBox="0 0 22 24"><path d="M11 1 L21 6 V17.5 L11 23 L1 17.5 V6 Z" fill="#21599b"/><path d="M11 1 L21 6 L11 11 L1 6 Z" fill="#5e9bd8"/><path d="M11 11 L21 6 V17.5 L11 23 Z" fill="#183c6b"/><path d="M1 6 L11 11 V23 L1 17.5 Z" fill="#2d6bb5"/><path d="M3 19 Q11 25 19 19" fill="none" stroke="#c8d8ec" stroke-width="1"/></svg>
<svg class="a" style="left:1258px;top:1043px;" width="26" height="26" viewBox="0 0 26 26"><circle cx="13" cy="13" r="11.5" fill="#fff" stroke="#3e9a9a" stroke-width="1.6"/><path d="M7 7 Q13 4 18 9 Q20 13 17 18 L14 22 Q10 23 8 19 Q11 15 9 12 Z" fill="#3a2e28"/><path d="M10 10 Q14 9 16 12 Q15 16 12 17 Q10 14 10 10 Z" fill="#f4f0ea"/></svg>
<svg class="a" style="left:1304px;top:1044px;" width="22" height="24" viewBox="0 0 22 24"><rect x="1" y="1" width="5" height="3.5" fill="#8ec5ef"/><rect x="5" y="6" width="5" height="3.5" fill="#58a6e6"/><rect x="1" y="10.5" width="5" height="3.5" fill="#2f86d8"/><rect x="10" y="11" width="5" height="3.5" fill="#a8d3f5"/><rect x="15" y="11" width="5" height="3.5" fill="#fff" stroke="#ddd" stroke-width="0.5"/><rect x="1" y="16" width="5" height="3.5" fill="#ffffff" stroke="#ddd" stroke-width="0.5"/><rect x="10" y="16" width="5" height="3.5" fill="#ffffff" stroke="#ddd" stroke-width="0.5"/><rect x="15" y="16" width="5" height="3.5" fill="#5fb0ec"/><rect x="1" y="20.5" width="5" height="3.5" fill="#1b6fc2"/><rect x="6" y="20.5" width="5" height="3.5" fill="#1b6fc2"/><rect x="11" y="20.5" width="5" height="3.5" fill="#1b6fc2"/><rect x="16" y="20.5" width="5" height="3.5" fill="#1b6fc2"/></svg>
<svg class="a" style="left:1346px;top:1044px;" width="26" height="24" viewBox="0 0 26 24"><rect x="1" y="1" width="23.5" height="22.5" rx="3" fill="#245b86"/><path d="M5 6 Q10 4 13 9 Q15 13 17 14 Q19 16 20 20 M13 9 Q12 13 10 15" fill="none" stroke="#dce8f2" stroke-width="0.9"/><path d="M18 3.5 L21.5 7 M19.5 3 L22 5.5" stroke="#fff" stroke-width="1.2"/></svg>
<svg class="a" style="left:1390px;top:1044px;" width="26" height="24" viewBox="0 0 26 24"><circle cx="12.8" cy="12" r="11.5" fill="#ef6a30"/><path d="M7 17.5 L15 9.5 M15.5 6 Q18 5.5 18 8 Q17.5 10 15.5 9.5" fill="none" stroke="#fff" stroke-width="1.6"/><path d="M6 18.5 L8 16.5" stroke="#fff" stroke-width="2"/></svg>
<svg class="a" style="left:1434px;top:1044px;" width="26" height="24" viewBox="0 0 26 24"><g transform="translate(12.5 12)"><circle r="8.5" fill="#7a7f86"/><rect x="-2.8" y="-11.5" width="5.6" height="5" rx="1" fill="#7a7f86" transform="rotate(0)"/><rect x="-2.8" y="-11.5" width="5.6" height="5" rx="1" fill="#7a7f86" transform="rotate(60)"/><rect x="-2.8" y="-11.5" width="5.6" height="5" rx="1" fill="#7a7f86" transform="rotate(120)"/><rect x="-2.8" y="-11.5" width="5.6" height="5" rx="1" fill="#7a7f86" transform="rotate(180)"/><rect x="-2.8" y="-11.5" width="5.6" height="5" rx="1" fill="#7a7f86" transform="rotate(240)"/><rect x="-2.8" y="-11.5" width="5.6" height="5" rx="1" fill="#7a7f86" transform="rotate(300)"/><circle r="5.3" fill="#fff"/><circle r="4" fill="#1565c0"/></g></svg>
<svg class="a" style="left:1479px;top:1044px;" width="24" height="24" viewBox="0 0 24 24"><defs><linearGradient id="ph" x1="0" y1="0" x2="1" y2="1"><stop offset="0" stop-color="#2f7fe0"/><stop offset="1" stop-color="#7a5acf"/></linearGradient></defs><rect x="1" y="1" width="22" height="22" rx="3" fill="url(#ph)"/><path d="M1 20 L9 11 L16 18 L23 13 V20 Q23 23 20 23 H4 Q1 23 1 20 Z" fill="#3db8f5"/><path d="M4 23 L12.5 14 L21 23 Z" fill="#a6e3ff"/><circle cx="17.5" cy="5.5" r="2" fill="#fff"/></svg>
<div class="a" style="left:1516px;top:1037px;width:37px;height:38px;background:#f9f9f9;border:1px solid #e4e4e4;border-radius:5px;box-sizing:border-box;"></div>
<svg class="a" style="left:1522px;top:1044px;" width="26" height="24" viewBox="0 0 26 24"><rect x="6" y="1" width="19" height="22" rx="1.5" fill="#107c41"/><rect x="14" y="1" width="11" height="7.3" fill="#33c481"/><rect x="14" y="8.3" width="11" height="7.3" fill="#21a366"/><rect x="6" y="15.6" width="19" height="7.4" fill="#185c37"/><rect x="1" y="6" width="12" height="12" rx="1.5" fill="#107c41"/><path d="M4 9 L10 15 M10 9 L4 15" stroke="#fff" stroke-width="1.7"/></svg>
<div class="a" style="left:1527px;top:1072px;width:16px;height:3px;background:#1a6fd0;border-radius:1.5px;"></div>
<div class="a" style="left:740px;top:1072px;width:6px;height:3px;background:#8a8a8a;border-radius:1.5px;"></div>
<div class="a" style="left:784px;top:1072px;width:6px;height:3px;background:#8a8a8a;border-radius:1.5px;"></div>
<div class="a" style="left:828px;top:1072px;width:6px;height:3px;background:#8a8a8a;border-radius:1.5px;"></div>
<div class="a" style="left:916px;top:1072px;width:6px;height:3px;background:#8a8a8a;border-radius:1.5px;"></div>
<div class="a" style="left:960px;top:1072px;width:6px;height:3px;background:#8a8a8a;border-radius:1.5px;"></div>
<div class="a" style="left:1092px;top:1072px;width:6px;height:3px;background:#8a8a8a;border-radius:1.5px;"></div>
<div class="a" style="left:1180px;top:1072px;width:6px;height:3px;background:#8a8a8a;border-radius:1.5px;"></div>
<div class="a" style="left:1444px;top:1072px;width:6px;height:3px;background:#8a8a8a;border-radius:1.5px;"></div>
<div class="a" style="left:1488px;top:1072px;width:6px;height:3px;background:#8a8a8a;border-radius:1.5px;"></div>
<div class="t" style="left:1872.50px;top:1043.24px;font-size:12px;color:#1b1b1b;transform:scaleX(0.9325);">17:14</div>
<div class="t" style="left:1839.25px;top:1058.74px;font-size:12px;color:#1b1b1b;transform:scaleX(1.0199);">04/09/2025</div>
</body></html>
